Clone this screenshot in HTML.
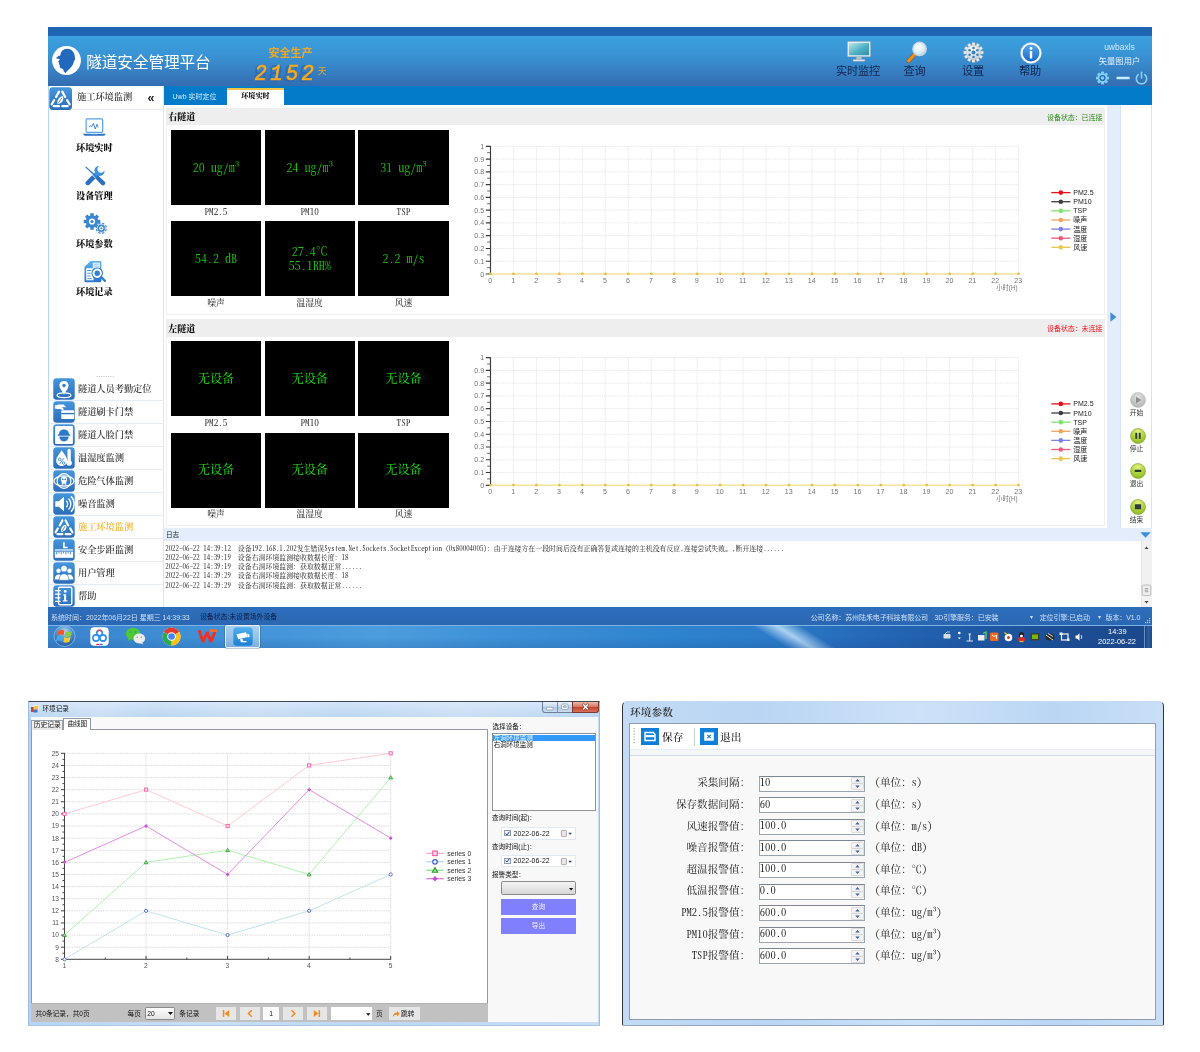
<!DOCTYPE html>
<html lang="zh-CN"><head><meta charset="utf-8"><title>隧道安全管理平台</title>
<style>
*{box-sizing:border-box;margin:0;padding:0}
html,body{width:1200px;height:1052px;background:#fff;overflow:hidden}
body{position:relative;font-family:"Liberation Sans","Noto Sans CJK SC",sans-serif;font-size:9px;color:#222;-webkit-font-smoothing:antialiased}
#root{position:absolute;left:0;top:0;width:1200px;height:1052px;will-change:transform;transform:translateZ(0)}
.a{position:absolute}
.t{position:absolute;white-space:nowrap;line-height:1}
.song{font-family:"Liberation Serif","Noto Serif CJK SC",serif}
.mono{font-family:"Liberation Mono","Noto Sans CJK SC",monospace}
.logf{font-family:"Noto Serif CJK SC","Liberation Serif",serif;font-feature-settings:"hwid";white-space:pre;letter-spacing:.015px}
.hwid{font-family:"Noto Serif CJK SC","Liberation Serif",serif;font-feature-settings:"hwid"}
svg{position:absolute;overflow:visible}
svg text{font-family:"Liberation Sans","Noto Sans CJK SC",sans-serif}
</style></head>
<body>
<div id="root">
<div class="a" style="left:48px;top:27px;width:1104px;height:10px;background:#2065b4"></div>
<div class="a" style="left:48px;top:36px;width:1104px;height:50px;background:linear-gradient(#3ba0dd 0%,#3995d5 35%,#3783c6 65%,#3572b6 90%,#346db1 100%)"></div>
<div class="a" style="left:48px;top:86px;width:1104px;height:19px;background:#037bc9"></div>
<svg style="left:52px;top:46.300px" width="29" height="29" viewBox="0 0 29 29">
<circle cx="14.500" cy="14.500" r="14.400" fill="#fff"/>
<path d="M4.200 11.700L6.100 10.200L8.300 9.600C8.500 5.800 11.200 2.800 14.800 2.800C19.300 2.800 22.600 6.200 22.800 10.500L23.100 14L22 14.800C21.600 18 20.300 20 18.300 22L13.300 27L11.900 25.400L11 23.100L8.300 22L7.600 20.800L7.950 19.700L7.200 18.500L6.800 16.300L6.050 15.900L7.600 13.600V12.900L4.500 12.500z" fill="#2169bd"/>
</svg>
<div class="t" style="left:86.3px;top:55.2px;font-size:15.7px;color:#fff;font-weight:400;letter-spacing:-0.15px">隧道安全管理平台</div>
<div class="t" style="left:290.5px;top:52.5px;font-size:11px;color:#f7a61c;transform:translate(-50%,-50%);font-weight:700">安全生产</div>
<svg style="left:0;top:0" width="400" height="100"><g transform="translate(256.0,65) skewX(-8)" fill="none" stroke="#2a5fb0" stroke-width="2" stroke-linecap="round" opacity=".55"><path d="M2 1H9M1 2.500V7M10 2.500V7M2 8.300H9M1 9.800V14.500M10 9.800V14.500M2 15.800H9"/></g><g transform="translate(271.1,65) skewX(-8)" fill="none" stroke="#2a5fb0" stroke-width="2" stroke-linecap="round" opacity=".55"><path d="M2 1H9M1 2.500V7M10 2.500V7M2 8.300H9M1 9.800V14.500M10 9.800V14.500M2 15.800H9"/></g><g transform="translate(286.2,65) skewX(-8)" fill="none" stroke="#2a5fb0" stroke-width="2" stroke-linecap="round" opacity=".55"><path d="M2 1H9M1 2.500V7M10 2.500V7M2 8.300H9M1 9.800V14.500M10 9.800V14.500M2 15.800H9"/></g><g transform="translate(301.3,65) skewX(-8)" fill="none" stroke="#2a5fb0" stroke-width="2" stroke-linecap="round" opacity=".55"><path d="M2 1H9M1 2.500V7M10 2.500V7M2 8.300H9M1 9.800V14.500M10 9.800V14.500M2 15.800H9"/></g></svg>
<div class="t" style="left:254.5px;top:63.5px;font-size:20.5px;color:#fbaa19;font-family:'Liberation Mono',monospace;font-weight:400;-webkit-text-stroke:.55px #fbaa19;font-style:italic;letter-spacing:3.400px;transform:scaleY(1.04);transform-origin:0 0">2152</div>
<div class="t" style="left:322.3px;top:70.5px;font-size:8.5px;color:#f7a61c;transform:translate(-50%,-50%);">天</div>
<svg style="left:847px;top:41.300px" width="24" height="21.200" viewBox="0 0 26 23">
<defs><linearGradient id="mg" x1="0" y1="0" x2="1" y2="1"><stop offset="0" stop-color="#bfe9ef"/><stop offset=".55" stop-color="#4fb0c4"/><stop offset="1" stop-color="#2b8fa8"/></linearGradient></defs>
<rect x=".5" y=".5" width="25" height="16.500" rx="1" fill="#eef2f5" stroke="#9aa7b2" stroke-width=".6"/>
<rect x="2" y="2" width="22" height="13.500" fill="url(#mg)"/>
<path d="M10.500 17h5l.8 3.200h-6.600z" fill="#b9c2ca"/><rect x="6.500" y="20" width="13" height="2" rx=".8" fill="#e6eaee" stroke="#9aa7b2" stroke-width=".4"/></svg>
<div class="t" style="left:858px;top:72px;font-size:11.2px;color:#12264f;transform:translate(-50%,-50%);letter-spacing:-.2px">实时监控</div>
<svg style="left:904.500px;top:41.200px" width="23.500" height="22.500" viewBox="0 0 24 24">
<defs><radialGradient id="lg" cx=".4" cy=".35" r=".7"><stop offset="0" stop-color="#ffffff"/><stop offset=".7" stop-color="#d6e9f7"/><stop offset="1" stop-color="#9ec4e4"/></radialGradient></defs>
<path d="M3.300 21.300L10 13.800" stroke="#9a5408" stroke-width="4.300" stroke-linecap="round"/><path d="M3.300 21.300L10 13.800" stroke="#ee8f1f" stroke-width="3.300" stroke-linecap="round"/>
<circle cx="15" cy="8.500" r="7.200" fill="url(#lg)" stroke="#c9d6e2" stroke-width="1.300"/></svg>
<div class="t" style="left:914.6px;top:72px;font-size:11.2px;color:#12264f;transform:translate(-50%,-50%);letter-spacing:-.2px">查询</div>
<svg style="left:963.300px;top:41.600px" width="21" height="21" viewBox="-12 -12 24 24">
<defs><radialGradient id="gg" cx=".4" cy=".3" r=".8"><stop offset="0" stop-color="#ffffff"/><stop offset="1" stop-color="#c3c9cf"/></radialGradient></defs>
<g fill="#e9ecef" stroke="#aab2ba" stroke-width=".4"><rect x="-1.700" y="-11.300" width="3.400" height="4.500" rx=".5" transform="rotate(0)"/><rect x="-1.700" y="-11.300" width="3.400" height="4.500" rx=".5" transform="rotate(30)"/><rect x="-1.700" y="-11.300" width="3.400" height="4.500" rx=".5" transform="rotate(60)"/><rect x="-1.700" y="-11.300" width="3.400" height="4.500" rx=".5" transform="rotate(90)"/><rect x="-1.700" y="-11.300" width="3.400" height="4.500" rx=".5" transform="rotate(120)"/><rect x="-1.700" y="-11.300" width="3.400" height="4.500" rx=".5" transform="rotate(150)"/><rect x="-1.700" y="-11.300" width="3.400" height="4.500" rx=".5" transform="rotate(180)"/><rect x="-1.700" y="-11.300" width="3.400" height="4.500" rx=".5" transform="rotate(210)"/><rect x="-1.700" y="-11.300" width="3.400" height="4.500" rx=".5" transform="rotate(240)"/><rect x="-1.700" y="-11.300" width="3.400" height="4.500" rx=".5" transform="rotate(270)"/><rect x="-1.700" y="-11.300" width="3.400" height="4.500" rx=".5" transform="rotate(300)"/><rect x="-1.700" y="-11.300" width="3.400" height="4.500" rx=".5" transform="rotate(330)"/></g><circle r="8.300" fill="url(#gg)" stroke="#b3bac1" stroke-width=".5"/>
<g fill="#3b82c4"><circle r="2.300"/><circle cx="0" cy="-5.200" r="1.500"/><circle cx="4.500" cy="-2.600" r="1.500"/><circle cx="4.500" cy="2.600" r="1.500"/><circle cx="0" cy="5.200" r="1.500"/><circle cx="-4.500" cy="2.600" r="1.500"/><circle cx="-4.500" cy="-2.600" r="1.500"/></g></svg>
<div class="t" style="left:973px;top:72px;font-size:11.2px;color:#12264f;transform:translate(-50%,-50%);letter-spacing:-.2px">设置</div>
<svg style="left:1020.300px;top:41.600px" width="22" height="22" viewBox="0 0 23 23">
<defs><linearGradient id="ig" x1="0" y1="0" x2="0" y2="1"><stop offset="0" stop-color="#5aa9ee"/><stop offset="1" stop-color="#1868c8"/></linearGradient></defs>
<circle cx="11.500" cy="11.500" r="10.800" fill="#fff" stroke="#dfe8f2" stroke-width=".6"/><circle cx="11.500" cy="11.500" r="8.800" fill="url(#ig)"/>
<circle cx="11.500" cy="6.800" r="1.500" fill="#fff"/><rect x="10.200" y="9.300" width="2.600" height="8" rx=".6" fill="#fff"/></svg>
<div class="t" style="left:1030px;top:72px;font-size:11.2px;color:#12264f;transform:translate(-50%,-50%);letter-spacing:-.2px">帮助</div>
<div class="t" style="left:1119.5px;top:47.2px;font-size:8.5px;color:#cfe6fb;transform:translate(-50%,-50%);">uwbaxls</div>
<div class="t" style="left:1119.5px;top:61.3px;font-size:8.3px;color:#e4f1fd;transform:translate(-50%,-50%);">矢量图用户</div>
<svg style="left:1094px;top:70.500px" width="58" height="14" viewBox="0 0 58 14">
<g transform="translate(8.500,7) scale(1.15)" fill="#7fd2f7"><rect x="-1.200" y="-5.600" width="2.400" height="2.600" transform="rotate(0)"/><rect x="-1.200" y="-5.600" width="2.400" height="2.600" transform="rotate(45)"/><rect x="-1.200" y="-5.600" width="2.400" height="2.600" transform="rotate(90)"/><rect x="-1.200" y="-5.600" width="2.400" height="2.600" transform="rotate(135)"/><rect x="-1.200" y="-5.600" width="2.400" height="2.600" transform="rotate(180)"/><rect x="-1.200" y="-5.600" width="2.400" height="2.600" transform="rotate(225)"/><rect x="-1.200" y="-5.600" width="2.400" height="2.600" transform="rotate(270)"/><rect x="-1.200" y="-5.600" width="2.400" height="2.600" transform="rotate(315)"/><circle r="4.200"/><circle r="2.700" fill="#2d6ab4"/><circle r="1.500"/></g>
<rect x="22.300" y="5.800" width="13.500" height="2.500" rx="1.200" fill="#c9ecff"/>
<g fill="none" stroke="#7fd2f7" stroke-width="1.600" stroke-linecap="round"><path d="M44.200 3.600a5.200 5.200 0 1 0 6.600 0"/><path d="M47.500 1.300v5.600"/></g></svg>
<div class="t" style="left:194.5px;top:95.5px;font-size:7px;color:#d7ecfb;transform:translate(-50%,-50%);">Uwb 实时定位</div>
<div class="a" style="left:227px;top:87.8px;width:57.4px;height:17.2px;background:#fff;border-top:2.400px solid #f6c443"></div>
<div class="t song" style="left:255.4px;top:96.6px;font-size:7.1px;color:#111;transform:translate(-50%,-50%);font-weight:900">环境实时</div>
<div class="a" style="left:48px;top:86px;width:115.5px;height:521.5px;background:#fff;border-left:1px solid #b9d8f2;border-right:1px solid #dbe6f0"></div>
<div class="a" style="left:49px;top:109px;width:114px;height:1px;background:#e4edf5"></div>
<svg style="left:48.9px;top:86.9px" width="23.3" height="23.3" viewBox="0 0 24 24"><defs><linearGradient id="tg" x1="0" y1="0" x2="0" y2="1"><stop offset="0" stop-color="#4496dc"/><stop offset="1" stop-color="#2c6db9"/></linearGradient></defs><rect x=".3" y=".3" width="23.400" height="23.400" rx="3.600" fill="url(#tg)"/><g stroke="#fff" stroke-width="2.300" stroke-linecap="round" fill="none"><path d="M10.300 4.800L7.300 10.300M5.300 13.500L2.800 17.800M4.800 19.800H10.300M13.700 19.800H19.200M21.200 17.800L18.700 13.500M16.700 10.300L13.700 4.800"/></g>
<g transform="translate(11.800 13.600) scale(1.45) translate(-11.800 -13)"><path d="M9.700 15.800c-.4-3 .9-5 3.800-5.800.9 2.900-.3 5-3.800 5.800z" fill="#fff"/><path d="M10.200 15.300l2.600-4" stroke="#2f79c9" stroke-width=".6"/></g></svg>
<div class="t song" style="left:77px;top:98.2px;font-size:9.3px;color:#3c3c3c;transform:translate(0,-50%);font-weight:600;letter-spacing:-.1px">施工环境监测</div>
<div class="t" style="left:151.0px;top:97.6px;font-size:12.5px;color:#222;transform:translate(-50%,-50%);font-weight:700">«</div>
<svg style="left:83.200px;top:117.800px" width="22.800" height="19.200" viewBox="0 0 24 20">
<rect x="3.300" y=".9" width="17.400" height="14.200" rx="1.200" fill="#fff" stroke="#5aa2e4" stroke-width="1.300"/>
<path d="M6.300 9.500l1.500-1.300 1.300 1 1.800-3.700 2 6 1.800-5 1.200 3.300" fill="none" stroke="#3a86d2" stroke-width="1" stroke-linejoin="round"/>
<path d="M.3 16.600h23.400c0 1.300-.9 2-2.100 2H2.400c-1.200 0-2.100-.7-2.100-2z" fill="#2c72c4"/><rect x="8.500" y="15.900" width="7" height="1" fill="#d9ebfb"/></svg>
<div class="t song" style="left:94.3px;top:149.2px;font-size:9.2px;color:#111;transform:translate(-50%,-50%);font-weight:900;letter-spacing:-.1px">环境实时</div>
<svg style="left:83.800px;top:164.800px" width="22.400" height="22.400" viewBox="0 0 24 24">
<path d="M16.300 1.200c-3.300-.2-5.700 2.700-4.900 5.900l.3.900-2.500 2.500 3.500 3.500 2.500-2.500c3.700 1.300 7.300-1.600 6.700-5.500-1.600 2.900-5 3-6.700.9-1.500-1.900-.9-4.600 1.100-5.700z" fill="#3c92de"/>
<path d="M8.800 10.900l3.500 3.500-6.600 6.700c-2.300 2.200-5.700-1.200-3.500-3.500z" fill="#2c70c0"/>
<path d="M1.300 2.500l.9-.9 9.300 8.300 1.900 1.900-1.200 1.200-1.900-1.900z" fill="#2f7bd0"/>
<path d="M11.900 14l2.900-2.900 7.200 6.600c2.400 2.300-1.100 5.800-3.400 3.400z" fill="#2c70c0"/></svg>
<div class="t song" style="left:94.3px;top:196.9px;font-size:9.2px;color:#111;transform:translate(-50%,-50%);font-weight:900;letter-spacing:-.1px">设备管理</div>
<svg style="left:82.7px;top:213px" width="24" height="21" viewBox="0 0 24 21">
<g transform="translate(9,8.500)" fill="#3a86d2"><rect x="-1.700" y="-8.300" width="3.400" height="3.600" transform="rotate(0)"/><rect x="-1.700" y="-8.300" width="3.400" height="3.600" transform="rotate(45)"/><rect x="-1.700" y="-8.300" width="3.400" height="3.600" transform="rotate(90)"/><rect x="-1.700" y="-8.300" width="3.400" height="3.600" transform="rotate(135)"/><rect x="-1.700" y="-8.300" width="3.400" height="3.600" transform="rotate(180)"/><rect x="-1.700" y="-8.300" width="3.400" height="3.600" transform="rotate(225)"/><rect x="-1.700" y="-8.300" width="3.400" height="3.600" transform="rotate(270)"/><rect x="-1.700" y="-8.300" width="3.400" height="3.600" transform="rotate(315)"/><circle r="6.200"/><circle r="3.100" fill="#fff"/><circle r="1.600"/></g>
<g transform="translate(18.300,15.300)" fill="#3a86d2"><rect x="-1.200" y="-5.600" width="2.400" height="2.600" transform="rotate(22)"/><rect x="-1.200" y="-5.600" width="2.400" height="2.600" transform="rotate(67)"/><rect x="-1.200" y="-5.600" width="2.400" height="2.600" transform="rotate(112)"/><rect x="-1.200" y="-5.600" width="2.400" height="2.600" transform="rotate(157)"/><rect x="-1.200" y="-5.600" width="2.400" height="2.600" transform="rotate(202)"/><rect x="-1.200" y="-5.600" width="2.400" height="2.600" transform="rotate(247)"/><rect x="-1.200" y="-5.600" width="2.400" height="2.600" transform="rotate(292)"/><rect x="-1.200" y="-5.600" width="2.400" height="2.600" transform="rotate(337)"/><circle r="4.100" stroke="#fff" stroke-width=".7"/><circle r="2.100" fill="#fff"/><circle r="1"/></g></svg>
<div class="t song" style="left:94.3px;top:244.6px;font-size:9.2px;color:#111;transform:translate(-50%,-50%);font-weight:900;letter-spacing:-.1px">环境参数</div>
<svg style="left:83.700px;top:260.300px" width="22" height="22.300" viewBox="0 0 24 24">
<defs><linearGradient id="dg" x1="0" y1="0" x2="0" y2="1"><stop offset="0" stop-color="#5fb0ee"/><stop offset="1" stop-color="#2a74c8"/></linearGradient></defs>
<path d="M7.100 1H17.500a1.400 1.400 0 0 1 1.400 1.400V22.600a1.400 1.400 0 0 1-1.400 1.400H1.900a1.400 1.400 0 0 1-1.400-1.400V7.600z" fill="url(#dg)"/>
<rect x="9.600" y="2.600" width="7.900" height="6" fill="#dcecfb"/><path d="M11 4.500h5M11 6.500h5" stroke="#9cc6ee" stroke-width=".9"/>
<rect x="2.400" y="8.800" width="8" height="13.200" fill="#fff"/><path d="M3.600 11.300h4.500M3.600 14.300h3.500M3.600 17.300h3.500M3.600 20.200h5" stroke="#3a86d2" stroke-width="1"/>
<circle cx="14.400" cy="14.300" r="6.300" fill="#2f7fd2"/><circle cx="14.400" cy="14.300" r="5.100" fill="#fff"/><circle cx="14.400" cy="14.300" r="2.900" fill="#2f7fd2"/>
<path d="M18.700 18.600l4.200 4" stroke="#2f7fd2" stroke-width="2.500" stroke-linecap="round"/></svg>
<div class="t song" style="left:94.3px;top:292.5px;font-size:9.2px;color:#111;transform:translate(-50%,-50%);font-weight:900;letter-spacing:-.1px">环境记录</div>
<div class="t" style="left:105.3px;top:373.5px;font-size:7px;color:#888;transform:translate(-50%,-50%);letter-spacing:.35px">........</div>
<svg style="left:52.6px;top:378.1px" width="22" height="22" viewBox="0 0 24 24"><defs><linearGradient id="tg" x1="0" y1="0" x2="0" y2="1"><stop offset="0" stop-color="#4496dc"/><stop offset="1" stop-color="#2c6db9"/></linearGradient></defs><rect x=".3" y=".3" width="23.400" height="23.400" rx="3.600" fill="url(#tg)"/><path d="M12 3.300c-3 0-5 2.200-5 4.900 0 3.300 3.400 6.300 5 9.600 1.600-3.300 5-6.300 5-9.600 0-2.700-2-4.900-5-4.900z" fill="#fff"/><circle cx="12" cy="8.200" r="1.900" fill="#2f79c9"/><ellipse cx="12" cy="18.800" rx="7.600" ry="2.600" fill="none" stroke="#fff" stroke-width="1.300"/></svg>
<div class="t song" style="left:78px;top:390.20000000000005px;font-size:9.3px;color:#3a3a3a;transform:translate(0,-50%);font-weight:600;letter-spacing:-.12px">隧道人员考勤定位</div>
<div class="a" style="left:49px;top:400px;width:114px;height:1px;background:#e6eef5"></div>
<svg style="left:52.6px;top:401.05px" width="22" height="22" viewBox="0 0 24 24"><defs><linearGradient id="tg" x1="0" y1="0" x2="0" y2="1"><stop offset="0" stop-color="#4496dc"/><stop offset="1" stop-color="#2c6db9"/></linearGradient></defs><rect x=".3" y=".3" width="23.400" height="23.400" rx="3.600" fill="url(#tg)"/><rect x="9" y="10" width="14" height="9.500" rx="1" fill="#fff"/><rect x="9" y="13" width="14" height="1.500" fill="#2f79c9"/><path d="M2 4.500h2.500l1-.8h6l3 3.200h-5l2 1.500v1.800l-4-1.600H4.500L2 8.300z" fill="#fff"/></svg>
<div class="t song" style="left:78px;top:413.15000000000003px;font-size:9.3px;color:#3a3a3a;transform:translate(0,-50%);font-weight:600;letter-spacing:-.12px">隧道刷卡门禁</div>
<div class="a" style="left:49px;top:423px;width:114px;height:1px;background:#e6eef5"></div>
<svg style="left:52.6px;top:424.0px" width="22" height="22" viewBox="0 0 24 24"><defs><linearGradient id="tg" x1="0" y1="0" x2="0" y2="1"><stop offset="0" stop-color="#4496dc"/><stop offset="1" stop-color="#2c6db9"/></linearGradient></defs><rect x=".3" y=".3" width="23.400" height="23.400" rx="3.600" fill="url(#tg)"/><rect x="2.300" y="2.300" width="19.400" height="19.400" rx="1" fill="#fff"/><path d="M6.500 11.300c0-3.300 2.400-5.300 5.500-5.300s5.500 2 5.500 5.300h1.300v1.400H5.200v-1.400z" fill="#2f79c9"/><path d="M7 13.600h10c0 3.200-2.200 5.400-5 5.400s-5-2.200-5-5.400z" fill="#2f79c9"/></svg>
<div class="t song" style="left:78px;top:436.1px;font-size:9.3px;color:#3a3a3a;transform:translate(0,-50%);font-weight:600;letter-spacing:-.12px">隧道人脸门禁</div>
<div class="a" style="left:49px;top:446px;width:114px;height:1px;background:#e6eef5"></div>
<svg style="left:52.6px;top:446.95000000000005px" width="22" height="22" viewBox="0 0 24 24"><defs><linearGradient id="tg" x1="0" y1="0" x2="0" y2="1"><stop offset="0" stop-color="#4496dc"/><stop offset="1" stop-color="#2c6db9"/></linearGradient></defs><rect x=".3" y=".3" width="23.400" height="23.400" rx="3.600" fill="url(#tg)"/><path d="M9.500 3.500c-2.600 4.300-6 7.300-6 11.300 0 3.400 2.600 6 6 6s6-2.600 6-6c0-4-3.400-7-6-11.300z" fill="#fff"/><rect x="15.800" y="2" width="3.600" height="15" rx="1.800" fill="#fff"/><circle cx="17.600" cy="17.500" r="3" fill="#fff"/><circle cx="7.300" cy="13.500" r="1.400" fill="none" stroke="#2f79c9" stroke-width=".9"/><circle cx="11.500" cy="17.500" r="1.400" fill="none" stroke="#2f79c9" stroke-width=".9"/><path d="M11.800 12.300l-4.800 6.400" stroke="#2f79c9" stroke-width=".9"/></svg>
<div class="t song" style="left:78px;top:459.05000000000007px;font-size:9.3px;color:#3a3a3a;transform:translate(0,-50%);font-weight:600;letter-spacing:-.12px">温湿度监测</div>
<div class="a" style="left:49px;top:469px;width:114px;height:1px;background:#e6eef5"></div>
<svg style="left:52.6px;top:469.90000000000003px" width="22" height="22" viewBox="0 0 24 24"><defs><linearGradient id="tg" x1="0" y1="0" x2="0" y2="1"><stop offset="0" stop-color="#4496dc"/><stop offset="1" stop-color="#2c6db9"/></linearGradient></defs><rect x=".3" y=".3" width="23.400" height="23.400" rx="3.600" fill="url(#tg)"/><ellipse cx="12" cy="12" rx="11" ry="5.600" fill="none" stroke="#fff" stroke-width="1.300"/><ellipse cx="12" cy="12" rx="7.500" ry="8" fill="none" stroke="#fff" stroke-width="1.300"/><circle cx="12" cy="10.300" r="3.400" fill="#fff"/><path d="M9.600 12.500h4.800v3.500h-1.200v-1.300h-.8v1.300h-.8v-1.300h-.8v1.300H9.600z" fill="#fff"/><circle cx="10.700" cy="10.300" r=".9" fill="#2f79c9"/><circle cx="13.300" cy="10.300" r=".9" fill="#2f79c9"/></svg>
<div class="t song" style="left:78px;top:482.00000000000006px;font-size:9.3px;color:#3a3a3a;transform:translate(0,-50%);font-weight:600;letter-spacing:-.12px">危险气体监测</div>
<div class="a" style="left:49px;top:492px;width:114px;height:1px;background:#e6eef5"></div>
<svg style="left:52.6px;top:492.85px" width="22" height="22" viewBox="0 0 24 24"><defs><linearGradient id="tg" x1="0" y1="0" x2="0" y2="1"><stop offset="0" stop-color="#4496dc"/><stop offset="1" stop-color="#2c6db9"/></linearGradient></defs><rect x=".3" y=".3" width="23.400" height="23.400" rx="3.600" fill="url(#tg)"/><path d="M2.500 9h3.800l5.700-5v16l-5.700-5H2.500z" fill="#fff"/><path d="M14.500 8.500a5 5 0 0 1 0 7M17 6a8.500 8.500 0 0 1 0 12M19.600 3.600a12 12 0 0 1 0 16.800" fill="none" stroke="#fff" stroke-width="1.500"/></svg>
<div class="t song" style="left:78px;top:504.95000000000005px;font-size:9.3px;color:#3a3a3a;transform:translate(0,-50%);font-weight:600;letter-spacing:-.12px">噪音监测</div>
<div class="a" style="left:49px;top:515px;width:114px;height:1px;background:#e6eef5"></div>
<svg style="left:52.6px;top:515.8px" width="22" height="22" viewBox="0 0 24 24"><defs><linearGradient id="tg" x1="0" y1="0" x2="0" y2="1"><stop offset="0" stop-color="#4496dc"/><stop offset="1" stop-color="#2c6db9"/></linearGradient></defs><rect x=".3" y=".3" width="23.400" height="23.400" rx="3.600" fill="url(#tg)"/><g stroke="#fff" stroke-width="2.300" stroke-linecap="round" fill="none"><path d="M10.300 4.800L7.300 10.300M5.300 13.500L2.800 17.800M4.800 19.800H10.300M13.700 19.800H19.200M21.200 17.800L18.700 13.500M16.700 10.300L13.700 4.800"/></g>
<g transform="translate(11.800 13.600) scale(1.45) translate(-11.800 -13)"><path d="M9.700 15.800c-.4-3 .9-5 3.800-5.800.9 2.900-.3 5-3.800 5.800z" fill="#fff"/><path d="M10.200 15.300l2.600-4" stroke="#2f79c9" stroke-width=".6"/></g></svg>
<div class="t song" style="left:78px;top:527.9px;font-size:9.3px;color:#f0b432;transform:translate(0,-50%);font-weight:600;letter-spacing:-.12px">施工环境监测</div>
<div class="a" style="left:49px;top:538px;width:114px;height:1px;background:#e6eef5"></div>
<svg style="left:52.6px;top:538.75px" width="22" height="22" viewBox="0 0 24 24"><defs><linearGradient id="tg" x1="0" y1="0" x2="0" y2="1"><stop offset="0" stop-color="#4496dc"/><stop offset="1" stop-color="#2c6db9"/></linearGradient></defs><rect x=".3" y=".3" width="23.400" height="23.400" rx="3.600" fill="url(#tg)"/><path d="M11 3.500h1.800v5h3.200v1.600H11z" fill="#fff"/><rect x="2" y="13.800" width="20" height="6.700" fill="#fff"/><path d="M4 13.800v3M6.500 13.800v2M9 13.800v3M11.500 13.800v2M14 13.800v3M16.500 13.800v2M19 13.800v3" stroke="#2f79c9" stroke-width=".9"/><rect x="2" y="11.300" width="20" height="1.300" fill="#fff"/></svg>
<div class="t song" style="left:78px;top:550.85px;font-size:9.3px;color:#3a3a3a;transform:translate(0,-50%);font-weight:600;letter-spacing:-.12px">安全步距监测</div>
<div class="a" style="left:49px;top:561px;width:114px;height:1px;background:#e6eef5"></div>
<svg style="left:52.6px;top:561.7px" width="22" height="22" viewBox="0 0 24 24"><defs><linearGradient id="tg" x1="0" y1="0" x2="0" y2="1"><stop offset="0" stop-color="#4496dc"/><stop offset="1" stop-color="#2c6db9"/></linearGradient></defs><rect x=".3" y=".3" width="23.400" height="23.400" rx="3.600" fill="url(#tg)"/><circle cx="6" cy="9.500" r="2.400" fill="#fff"/><circle cx="18" cy="9.500" r="2.400" fill="#fff"/><path d="M1.800 19c0-3.300 1.800-5.500 4.200-5.500 1.200 0 2.200.5 3 1.500-.8 1.100-1.300 2.400-1.400 4zM22.200 19c0-3.300-1.800-5.500-4.200-5.500-1.200 0-2.200.5-3 1.500.8 1.100 1.300 2.400 1.400 4z" fill="#fff"/><circle cx="12" cy="7.300" r="3.100" fill="#fff"/><path d="M6.600 20c0-4.300 2.300-7.300 5.400-7.300s5.400 3 5.400 7.300z" fill="#fff" stroke="#2f79c9" stroke-width=".7"/></svg>
<div class="t song" style="left:78px;top:573.8000000000001px;font-size:9.3px;color:#3a3a3a;transform:translate(0,-50%);font-weight:600;letter-spacing:-.12px">用户管理</div>
<div class="a" style="left:49px;top:584px;width:114px;height:1px;background:#e6eef5"></div>
<svg style="left:52.6px;top:584.65px" width="22" height="22" viewBox="0 0 24 24"><defs><linearGradient id="tg" x1="0" y1="0" x2="0" y2="1"><stop offset="0" stop-color="#4496dc"/><stop offset="1" stop-color="#2c6db9"/></linearGradient></defs><rect x=".3" y=".3" width="23.400" height="23.400" rx="3.600" fill="url(#tg)"/><rect x="6" y="2.500" width="14.500" height="19" rx="1.500" fill="none" stroke="#fff" stroke-width="1.500"/><path d="M2.800 6.200h5M2.800 10h5M2.800 14h5M2.800 17.800h5" stroke="#fff" stroke-width="1.500" stroke-linecap="round"/><circle cx="13.300" cy="7" r="1.500" fill="#fff"/><path d="M11.300 10h3v6.500h1.400v1.500h-5v-1.500h1.400v-5h-.8z" fill="#fff"/></svg>
<div class="t song" style="left:78px;top:596.75px;font-size:9.3px;color:#3a3a3a;transform:translate(0,-50%);font-weight:600;letter-spacing:-.12px">帮助</div>
<div class="a" style="left:164px;top:105px;width:988px;height:422.5px;background:#fff;border-right:1px solid #d3e3f4"></div>
<div class="a" style="left:1107.3px;top:105px;width:12.5px;height:422.5px;background:#e3edfb"></div>
<div class="a" style="left:1119.8px;top:105px;width:0.8px;height:422.5px;background:#d5e2f2"></div>
<svg style="left:1110px;top:312px" width="7" height="10" viewBox="0 0 7 10"><path d="M.4.3L6.400 5 .4 9.700z" fill="#3f8fd8"/></svg>
<div class="a" style="left:165.5px;top:108px;width:939.8px;height:206.6px;border:1px solid #efefef;background:#fff"></div>
<div class="a" style="left:165.5px;top:108px;width:939.8px;height:17.3px;background:#eeeeee"></div>
<div class="t song" style="left:168.3px;top:117.3px;font-size:9px;color:#111;transform:translate(0,-50%);font-weight:900">右隧道</div>
<div class="t" style="left:1102.3px;top:117.1px;font-size:7px;color:#2c8a1c;transform:translate(-100%,-50%);letter-spacing:-.1px">设备状态：已连接</div>
<div class="a" style="left:170.75px;top:130.0px;width:90.5px;height:75px;background:#000"><div class="t song" style="left:50%;top:50%;transform:translate(-50%,-50%);font-size:12px;color:#1ec40d;text-align:center;line-height:12.8px"><span class="hwid">20 ug/m³</span></div></div>
<div class="t song" style="left:215.95px;top:211.6px;font-size:9.2px;color:#222;transform:translate(-50%,-50%);"><span class="hwid">PM2.5</span></div>
<div class="a" style="left:264.5px;top:130.0px;width:90.5px;height:75px;background:#000"><div class="t song" style="left:50%;top:50%;transform:translate(-50%,-50%);font-size:12px;color:#1ec40d;text-align:center;line-height:12.8px"><span class="hwid">24 ug/m³</span></div></div>
<div class="t song" style="left:309.7px;top:211.6px;font-size:9.2px;color:#222;transform:translate(-50%,-50%);"><span class="hwid">PM10</span></div>
<div class="a" style="left:358.25px;top:130.0px;width:90.5px;height:75px;background:#000"><div class="t song" style="left:50%;top:50%;transform:translate(-50%,-50%);font-size:12px;color:#1ec40d;text-align:center;line-height:12.8px"><span class="hwid">31 ug/m³</span></div></div>
<div class="t song" style="left:403.45px;top:211.6px;font-size:9.2px;color:#222;transform:translate(-50%,-50%);"><span class="hwid">TSP</span></div>
<div class="a" style="left:170.75px;top:221.25px;width:90.5px;height:75px;background:#000"><div class="t song" style="left:50%;top:50%;transform:translate(-50%,-50%);font-size:12px;color:#1ec40d;text-align:center;line-height:12.8px"><span class="hwid">54.2 dB</span></div></div>
<div class="t song" style="left:215.95px;top:302.85px;font-size:8.8px;color:#222;transform:translate(-50%,-50%);"><span class="hwid">噪声</span></div>
<div class="a" style="left:264.5px;top:221.25px;width:90.5px;height:75px;background:#000"><div class="t song" style="left:50%;top:50%;transform:translate(-50%,-50%);font-size:12px;color:#1ec40d;text-align:center;line-height:12.8px"><span class="hwid">27.4℃</span><br><span class="hwid">55.1RH%</span></div></div>
<div class="t song" style="left:309.7px;top:302.85px;font-size:8.8px;color:#222;transform:translate(-50%,-50%);"><span class="hwid">温湿度</span></div>
<div class="a" style="left:358.25px;top:221.25px;width:90.5px;height:75px;background:#000"><div class="t song" style="left:50%;top:50%;transform:translate(-50%,-50%);font-size:12px;color:#1ec40d;text-align:center;line-height:12.8px"><span class="hwid">2.2 m/s</span></div></div>
<div class="t song" style="left:403.45px;top:302.85px;font-size:8.8px;color:#222;transform:translate(-50%,-50%);"><span class="hwid">风速</span></div>
<div class="a" style="left:165.5px;top:319.3px;width:939.8px;height:206.6px;border:1px solid #efefef;background:#fff"></div>
<div class="a" style="left:165.5px;top:319.3px;width:939.8px;height:17.3px;background:#eeeeee"></div>
<div class="t song" style="left:168.3px;top:328.6px;font-size:9px;color:#111;transform:translate(0,-50%);font-weight:900">左隧道</div>
<div class="t" style="left:1102.3px;top:328.40000000000003px;font-size:7px;color:#f0141e;transform:translate(-100%,-50%);letter-spacing:-.1px">设备状态：未连接</div>
<div class="a" style="left:170.75px;top:341.3px;width:90.5px;height:75px;background:#000"><div class="t song" style="left:50%;top:50%;transform:translate(-50%,-50%);font-size:12.2px;color:#22e614;">无设备</div></div>
<div class="t song" style="left:215.95px;top:422.9px;font-size:9.2px;color:#222;transform:translate(-50%,-50%);"><span class="hwid">PM2.5</span></div>
<div class="a" style="left:264.5px;top:341.3px;width:90.5px;height:75px;background:#000"><div class="t song" style="left:50%;top:50%;transform:translate(-50%,-50%);font-size:12.2px;color:#22e614;">无设备</div></div>
<div class="t song" style="left:309.7px;top:422.9px;font-size:9.2px;color:#222;transform:translate(-50%,-50%);"><span class="hwid">PM10</span></div>
<div class="a" style="left:358.25px;top:341.3px;width:90.5px;height:75px;background:#000"><div class="t song" style="left:50%;top:50%;transform:translate(-50%,-50%);font-size:12.2px;color:#22e614;">无设备</div></div>
<div class="t song" style="left:403.45px;top:422.9px;font-size:9.2px;color:#222;transform:translate(-50%,-50%);"><span class="hwid">TSP</span></div>
<div class="a" style="left:170.75px;top:432.55px;width:90.5px;height:75px;background:#000"><div class="t song" style="left:50%;top:50%;transform:translate(-50%,-50%);font-size:12.2px;color:#22e614;">无设备</div></div>
<div class="t song" style="left:215.95px;top:514.15px;font-size:8.8px;color:#222;transform:translate(-50%,-50%);"><span class="hwid">噪声</span></div>
<div class="a" style="left:264.5px;top:432.55px;width:90.5px;height:75px;background:#000"><div class="t song" style="left:50%;top:50%;transform:translate(-50%,-50%);font-size:12.2px;color:#22e614;">无设备</div></div>
<div class="t song" style="left:309.7px;top:514.15px;font-size:8.8px;color:#222;transform:translate(-50%,-50%);"><span class="hwid">温湿度</span></div>
<div class="a" style="left:358.25px;top:432.55px;width:90.5px;height:75px;background:#000"><div class="t song" style="left:50%;top:50%;transform:translate(-50%,-50%);font-size:12.2px;color:#22e614;">无设备</div></div>
<div class="t song" style="left:403.45px;top:514.15px;font-size:8.8px;color:#222;transform:translate(-50%,-50%);"><span class="hwid">风速</span></div>
<svg style="left:0;top:0" width="1200" height="1052"><g font-size="7.100" fill="#747474"><path d="M490.5 146.30H1018.58M490.5 159.07H1018.58M490.5 171.84H1018.58M490.5 184.61H1018.58M490.5 197.38H1018.58M490.5 210.15H1018.58M490.5 222.92H1018.58M490.5 235.69H1018.58M490.5 248.46H1018.58M490.5 261.23H1018.58M513.46 146.3V274.00M536.42 146.3V274.00M559.38 146.3V274.00M582.34 146.3V274.00M605.30 146.3V274.00M628.26 146.3V274.00M651.22 146.3V274.00M674.18 146.3V274.00M697.14 146.3V274.00M720.10 146.3V274.00M743.06 146.3V274.00M766.02 146.3V274.00M788.98 146.3V274.00M811.94 146.3V274.00M834.90 146.3V274.00M857.86 146.3V274.00M880.82 146.3V274.00M903.78 146.3V274.00M926.74 146.3V274.00M949.70 146.3V274.00M972.66 146.3V274.00M995.62 146.3V274.00M1018.58 146.3V274.00" stroke="#dcdcdc" stroke-width=".65" stroke-dasharray="1.100 .7" fill="none"/><path d="M490.5 145.9V274.4M485.8 146.30H490.5M485.8 159.07H490.5M485.8 171.84H490.5M485.8 184.61H490.5M485.8 197.38H490.5M485.8 210.15H490.5M485.8 222.92H490.5M485.8 235.69H490.5M485.8 248.46H490.5M485.8 261.23H490.5M485.8 274.00H490.5" stroke="#3a3a3a" stroke-width="1.150" fill="none"/><path d="M487.1 152.69H490.5M487.1 165.46H490.5M487.1 178.23H490.5M487.1 191.00H490.5M487.1 203.77H490.5M487.1 216.54H490.5M487.1 229.31H490.5M487.1 242.07H490.5M487.1 254.85H490.5M487.1 267.62H490.5" stroke="#4a4a4a" stroke-width=".8" fill="none"/><path d="M490.5 274.00H1018.58" stroke="#f4e19a" stroke-width="1.500"/><g fill="#e6bf3c"><circle cx="490.50" cy="273.80" r="1.400"/><circle cx="513.46" cy="273.80" r="1.400"/><circle cx="536.42" cy="273.80" r="1.400"/><circle cx="559.38" cy="273.80" r="1.400"/><circle cx="582.34" cy="273.80" r="1.400"/><circle cx="605.30" cy="273.80" r="1.400"/><circle cx="628.26" cy="273.80" r="1.400"/><circle cx="651.22" cy="273.80" r="1.400"/><circle cx="674.18" cy="273.80" r="1.400"/><circle cx="697.14" cy="273.80" r="1.400"/><circle cx="720.10" cy="273.80" r="1.400"/><circle cx="743.06" cy="273.80" r="1.400"/><circle cx="766.02" cy="273.80" r="1.400"/><circle cx="788.98" cy="273.80" r="1.400"/><circle cx="811.94" cy="273.80" r="1.400"/><circle cx="834.90" cy="273.80" r="1.400"/><circle cx="857.86" cy="273.80" r="1.400"/><circle cx="880.82" cy="273.80" r="1.400"/><circle cx="903.78" cy="273.80" r="1.400"/><circle cx="926.74" cy="273.80" r="1.400"/><circle cx="949.70" cy="273.80" r="1.400"/><circle cx="972.66" cy="273.80" r="1.400"/><circle cx="995.62" cy="273.80" r="1.400"/><circle cx="1018.58" cy="273.80" r="1.400"/></g><text x="484.1" y="148.80" text-anchor="end">1</text><text x="484.1" y="161.57" text-anchor="end">0.9</text><text x="484.1" y="174.34" text-anchor="end">0.8</text><text x="484.1" y="187.11" text-anchor="end">0.7</text><text x="484.1" y="199.88" text-anchor="end">0.6</text><text x="484.1" y="212.65" text-anchor="end">0.5</text><text x="484.1" y="225.42" text-anchor="end">0.4</text><text x="484.1" y="238.19" text-anchor="end">0.3</text><text x="484.1" y="250.96" text-anchor="end">0.2</text><text x="484.1" y="263.73" text-anchor="end">0.1</text><text x="484.1" y="276.50" text-anchor="end">0</text><text x="490.20" y="282.50" text-anchor="middle">0</text><text x="513.16" y="282.50" text-anchor="middle">1</text><text x="536.12" y="282.50" text-anchor="middle">2</text><text x="559.08" y="282.50" text-anchor="middle">3</text><text x="582.04" y="282.50" text-anchor="middle">4</text><text x="605.00" y="282.50" text-anchor="middle">5</text><text x="627.96" y="282.50" text-anchor="middle">6</text><text x="650.92" y="282.50" text-anchor="middle">7</text><text x="673.88" y="282.50" text-anchor="middle">8</text><text x="696.84" y="282.50" text-anchor="middle">9</text><text x="719.80" y="282.50" text-anchor="middle">10</text><text x="742.76" y="282.50" text-anchor="middle">11</text><text x="765.72" y="282.50" text-anchor="middle">12</text><text x="788.68" y="282.50" text-anchor="middle">13</text><text x="811.64" y="282.50" text-anchor="middle">14</text><text x="834.60" y="282.50" text-anchor="middle">15</text><text x="857.56" y="282.50" text-anchor="middle">16</text><text x="880.52" y="282.50" text-anchor="middle">17</text><text x="903.48" y="282.50" text-anchor="middle">18</text><text x="926.44" y="282.50" text-anchor="middle">19</text><text x="949.40" y="282.50" text-anchor="middle">20</text><text x="972.36" y="282.50" text-anchor="middle">21</text><text x="995.32" y="282.50" text-anchor="middle">22</text><text x="1018.28" y="282.50" text-anchor="middle">23</text><text x="1017.58" y="289.60" text-anchor="end" font-size="6.300">小时(H)</text><path d="M1051.300 192.60H1070.400" stroke="#e60f16" stroke-width="1.300"/><circle cx="1060.800" cy="192.60" r="2.300" fill="#e60f16"/><text x="1073.300" y="195.10" font-size="7" fill="#222">PM2.5</text><path d="M1051.300 201.72H1070.400" stroke="#3c3c44" stroke-width="1.300"/><circle cx="1060.800" cy="201.72" r="2.300" fill="#3c3c44"/><text x="1073.300" y="204.22" font-size="7" fill="#222">PM10</text><path d="M1051.300 210.84H1070.400" stroke="#7fe36f" stroke-width="1.300"/><circle cx="1060.800" cy="210.84" r="2.300" fill="#7fe36f"/><text x="1073.300" y="213.34" font-size="7" fill="#222">TSP</text><path d="M1051.300 219.96H1070.400" stroke="#f2a25a" stroke-width="1.300"/><circle cx="1060.800" cy="219.96" r="2.300" fill="#f2a25a"/><text x="1073.300" y="222.46" font-size="7" fill="#222">噪声</text><path d="M1051.300 229.08H1070.400" stroke="#7b80e3" stroke-width="1.300"/><circle cx="1060.800" cy="229.08" r="2.300" fill="#7b80e3"/><text x="1073.300" y="231.58" font-size="7" fill="#222">温度</text><path d="M1051.300 238.20H1070.400" stroke="#ee5a7c" stroke-width="1.300"/><circle cx="1060.800" cy="238.20" r="2.300" fill="#ee5a7c"/><text x="1073.300" y="240.70" font-size="7" fill="#222">湿度</text><path d="M1051.300 247.32H1070.400" stroke="#e6c94a" stroke-width="1.300"/><circle cx="1060.800" cy="247.32" r="2.300" fill="#e6c94a"/><text x="1073.300" y="249.82" font-size="7" fill="#222">风速</text></g><g font-size="7.100" fill="#747474"><path d="M490.5 357.60H1018.58M490.5 370.37H1018.58M490.5 383.14H1018.58M490.5 395.91H1018.58M490.5 408.68H1018.58M490.5 421.45H1018.58M490.5 434.22H1018.58M490.5 446.99H1018.58M490.5 459.76H1018.58M490.5 472.53H1018.58M513.46 357.6V485.30M536.42 357.6V485.30M559.38 357.6V485.30M582.34 357.6V485.30M605.30 357.6V485.30M628.26 357.6V485.30M651.22 357.6V485.30M674.18 357.6V485.30M697.14 357.6V485.30M720.10 357.6V485.30M743.06 357.6V485.30M766.02 357.6V485.30M788.98 357.6V485.30M811.94 357.6V485.30M834.90 357.6V485.30M857.86 357.6V485.30M880.82 357.6V485.30M903.78 357.6V485.30M926.74 357.6V485.30M949.70 357.6V485.30M972.66 357.6V485.30M995.62 357.6V485.30M1018.58 357.6V485.30" stroke="#dcdcdc" stroke-width=".65" stroke-dasharray="1.100 .7" fill="none"/><path d="M490.5 357.20000000000005V485.7M485.8 357.60H490.5M485.8 370.37H490.5M485.8 383.14H490.5M485.8 395.91H490.5M485.8 408.68H490.5M485.8 421.45H490.5M485.8 434.22H490.5M485.8 446.99H490.5M485.8 459.76H490.5M485.8 472.53H490.5M485.8 485.30H490.5" stroke="#3a3a3a" stroke-width="1.150" fill="none"/><path d="M487.1 363.99H490.5M487.1 376.75H490.5M487.1 389.53H490.5M487.1 402.30H490.5M487.1 415.06H490.5M487.1 427.84H490.5M487.1 440.61H490.5M487.1 453.38H490.5M487.1 466.15H490.5M487.1 478.92H490.5" stroke="#4a4a4a" stroke-width=".8" fill="none"/><path d="M490.5 485.30H1018.58" stroke="#f4e19a" stroke-width="1.500"/><g fill="#e6bf3c"><circle cx="490.50" cy="485.10" r="1.400"/><circle cx="513.46" cy="485.10" r="1.400"/><circle cx="536.42" cy="485.10" r="1.400"/><circle cx="559.38" cy="485.10" r="1.400"/><circle cx="582.34" cy="485.10" r="1.400"/><circle cx="605.30" cy="485.10" r="1.400"/><circle cx="628.26" cy="485.10" r="1.400"/><circle cx="651.22" cy="485.10" r="1.400"/><circle cx="674.18" cy="485.10" r="1.400"/><circle cx="697.14" cy="485.10" r="1.400"/><circle cx="720.10" cy="485.10" r="1.400"/><circle cx="743.06" cy="485.10" r="1.400"/><circle cx="766.02" cy="485.10" r="1.400"/><circle cx="788.98" cy="485.10" r="1.400"/><circle cx="811.94" cy="485.10" r="1.400"/><circle cx="834.90" cy="485.10" r="1.400"/><circle cx="857.86" cy="485.10" r="1.400"/><circle cx="880.82" cy="485.10" r="1.400"/><circle cx="903.78" cy="485.10" r="1.400"/><circle cx="926.74" cy="485.10" r="1.400"/><circle cx="949.70" cy="485.10" r="1.400"/><circle cx="972.66" cy="485.10" r="1.400"/><circle cx="995.62" cy="485.10" r="1.400"/><circle cx="1018.58" cy="485.10" r="1.400"/></g><text x="484.1" y="360.10" text-anchor="end">1</text><text x="484.1" y="372.87" text-anchor="end">0.9</text><text x="484.1" y="385.64" text-anchor="end">0.8</text><text x="484.1" y="398.41" text-anchor="end">0.7</text><text x="484.1" y="411.18" text-anchor="end">0.6</text><text x="484.1" y="423.95" text-anchor="end">0.5</text><text x="484.1" y="436.72" text-anchor="end">0.4</text><text x="484.1" y="449.49" text-anchor="end">0.3</text><text x="484.1" y="462.26" text-anchor="end">0.2</text><text x="484.1" y="475.03" text-anchor="end">0.1</text><text x="484.1" y="487.80" text-anchor="end">0</text><text x="490.20" y="493.80" text-anchor="middle">0</text><text x="513.16" y="493.80" text-anchor="middle">1</text><text x="536.12" y="493.80" text-anchor="middle">2</text><text x="559.08" y="493.80" text-anchor="middle">3</text><text x="582.04" y="493.80" text-anchor="middle">4</text><text x="605.00" y="493.80" text-anchor="middle">5</text><text x="627.96" y="493.80" text-anchor="middle">6</text><text x="650.92" y="493.80" text-anchor="middle">7</text><text x="673.88" y="493.80" text-anchor="middle">8</text><text x="696.84" y="493.80" text-anchor="middle">9</text><text x="719.80" y="493.80" text-anchor="middle">10</text><text x="742.76" y="493.80" text-anchor="middle">11</text><text x="765.72" y="493.80" text-anchor="middle">12</text><text x="788.68" y="493.80" text-anchor="middle">13</text><text x="811.64" y="493.80" text-anchor="middle">14</text><text x="834.60" y="493.80" text-anchor="middle">15</text><text x="857.56" y="493.80" text-anchor="middle">16</text><text x="880.52" y="493.80" text-anchor="middle">17</text><text x="903.48" y="493.80" text-anchor="middle">18</text><text x="926.44" y="493.80" text-anchor="middle">19</text><text x="949.40" y="493.80" text-anchor="middle">20</text><text x="972.36" y="493.80" text-anchor="middle">21</text><text x="995.32" y="493.80" text-anchor="middle">22</text><text x="1018.28" y="493.80" text-anchor="middle">23</text><text x="1017.58" y="500.90" text-anchor="end" font-size="6.300">小时(H)</text><path d="M1051.300 403.90H1070.400" stroke="#e60f16" stroke-width="1.300"/><circle cx="1060.800" cy="403.90" r="2.300" fill="#e60f16"/><text x="1073.300" y="406.40" font-size="7" fill="#222">PM2.5</text><path d="M1051.300 413.02H1070.400" stroke="#3c3c44" stroke-width="1.300"/><circle cx="1060.800" cy="413.02" r="2.300" fill="#3c3c44"/><text x="1073.300" y="415.52" font-size="7" fill="#222">PM10</text><path d="M1051.300 422.14H1070.400" stroke="#7fe36f" stroke-width="1.300"/><circle cx="1060.800" cy="422.14" r="2.300" fill="#7fe36f"/><text x="1073.300" y="424.64" font-size="7" fill="#222">TSP</text><path d="M1051.300 431.26H1070.400" stroke="#f2a25a" stroke-width="1.300"/><circle cx="1060.800" cy="431.26" r="2.300" fill="#f2a25a"/><text x="1073.300" y="433.76" font-size="7" fill="#222">噪声</text><path d="M1051.300 440.38H1070.400" stroke="#7b80e3" stroke-width="1.300"/><circle cx="1060.800" cy="440.38" r="2.300" fill="#7b80e3"/><text x="1073.300" y="442.88" font-size="7" fill="#222">温度</text><path d="M1051.300 449.50H1070.400" stroke="#ee5a7c" stroke-width="1.300"/><circle cx="1060.800" cy="449.50" r="2.300" fill="#ee5a7c"/><text x="1073.300" y="452.00" font-size="7" fill="#222">湿度</text><path d="M1051.300 458.62H1070.400" stroke="#e6c94a" stroke-width="1.300"/><circle cx="1060.800" cy="458.62" r="2.300" fill="#e6c94a"/><text x="1073.300" y="461.12" font-size="7" fill="#222">风速</text></g></svg>
<svg style="left:1129.5px;top:392px" width="16" height="16" viewBox="0 0 16 16"><defs><radialGradient id="bgp" cx=".5" cy=".3" r=".8"><stop offset="0" stop-color="#e2e2e2"/><stop offset="1" stop-color="#aeaeae"/></radialGradient></defs><circle cx="8" cy="8" r="7.500" fill="url(#bgp)" stroke="#b9b9b9" stroke-width=".6"/><path d="M6 4.800L11.300 8 6 11.200z" fill="#8c8c8c"/></svg>
<div class="t" style="left:1136.5px;top:413px;font-size:6.8px;color:#333;transform:translate(-50%,-50%);">开始</div>
<svg style="left:1129.5px;top:427.7px" width="16" height="16" viewBox="0 0 16 16"><defs><radialGradient id="bgpause" cx=".5" cy=".25" r=".85"><stop offset="0" stop-color="#e2f282"/><stop offset=".55" stop-color="#a9d038"/><stop offset="1" stop-color="#86ae22"/></radialGradient></defs><circle cx="8" cy="8" r="7.500" fill="url(#bgpause)" stroke="#7c9f26" stroke-width=".6"/><rect x="5.300" y="4.800" width="1.900" height="6" fill="#2f3a3a"/><rect x="8.800" y="4.800" width="1.900" height="6" fill="#2f3a3a"/></svg>
<div class="t" style="left:1136.5px;top:448.7px;font-size:6.8px;color:#333;transform:translate(-50%,-50%);">停止</div>
<svg style="left:1129.5px;top:463px" width="16" height="16" viewBox="0 0 16 16"><defs><radialGradient id="bgminus" cx=".5" cy=".25" r=".85"><stop offset="0" stop-color="#e2f282"/><stop offset=".55" stop-color="#a9d038"/><stop offset="1" stop-color="#86ae22"/></radialGradient></defs><circle cx="8" cy="8" r="7.500" fill="url(#bgminus)" stroke="#7c9f26" stroke-width=".6"/><rect x="4.600" y="6.800" width="6.800" height="2.200" rx=".8" fill="#2f3a3a"/></svg>
<div class="t" style="left:1136.5px;top:484px;font-size:6.8px;color:#333;transform:translate(-50%,-50%);">退出</div>
<svg style="left:1129.5px;top:498.6px" width="16" height="16" viewBox="0 0 16 16"><defs><radialGradient id="bgstop" cx=".5" cy=".25" r=".85"><stop offset="0" stop-color="#e2f282"/><stop offset=".55" stop-color="#a9d038"/><stop offset="1" stop-color="#86ae22"/></radialGradient></defs><circle cx="8" cy="8" r="7.500" fill="url(#bgstop)" stroke="#7c9f26" stroke-width=".6"/><rect x="4.900" y="5.300" width="6.200" height="5" rx=".5" fill="#2f3a3a"/></svg>
<div class="t" style="left:1136.5px;top:519.6px;font-size:6.8px;color:#333;transform:translate(-50%,-50%);">结束</div>
<div class="a" style="left:164px;top:527.8px;width:988px;height:13.4px;background:#e3edfb"></div>
<div class="t" style="left:166px;top:534.8px;font-size:6.6px;color:#222;transform:translate(0,-50%);">日志</div>
<svg style="left:1139.500px;top:532px" width="11" height="6" viewBox="0 0 11 6"><path d="M.3.300h10.400L5.500 5.700z" fill="#3f8fd8"/></svg>
<div class="a" style="left:164px;top:541.2px;width:988px;height:66.5px;background:#fff"></div>
<div class="t logf" style="left:165.2px;top:547.6px;font-size:6.9px;color:#1a1a1a;transform:translate(0,-50%);">2022-06-22 14:39:12  设备192.168.1.202发生错误System.Net.Sockets.SocketException (0x80004005): 由于连接方在一段时间后没有正确答复或连接的主机没有反应，连接尝试失败。,断开连接......</div>
<div class="t logf" style="left:165.2px;top:556.85px;font-size:6.9px;color:#1a1a1a;transform:translate(0,-50%);">2022-06-22 14:39:19  设备右洞环境监测接收数据长度：18</div>
<div class="t logf" style="left:165.2px;top:566.1px;font-size:6.9px;color:#1a1a1a;transform:translate(0,-50%);">2022-06-22 14:39:19  设备右洞环境监测：获取数据正常......</div>
<div class="t logf" style="left:165.2px;top:575.35px;font-size:6.9px;color:#1a1a1a;transform:translate(0,-50%);">2022-06-22 14:39:29  设备右洞环境监测接收数据长度：18</div>
<div class="t logf" style="left:165.2px;top:584.6px;font-size:6.9px;color:#1a1a1a;transform:translate(0,-50%);">2022-06-22 14:39:29  设备右洞环境监测：获取数据正常......</div>
<div class="a" style="left:1140.5px;top:541.2px;width:11.2px;height:66.5px;background:#f1f1f1;border-left:1px solid #e6e6e6"></div>
<svg style="left:1141px;top:541px" width="11" height="67" viewBox="0 0 11 67"><path d="M3.500 8L5.500 5.500 7.500 8zM3.500 60L5.500 62.500 7.500 60z" fill="#444"/><rect x="1.200" y="44" width="8.600" height="10.500" rx="1.200" fill="#ededed" stroke="#a9a9a9" stroke-width=".7"/><path d="M3.800 47.700h3.400M3.800 49.200h3.400M3.800 50.700h3.400" stroke="#777" stroke-width=".6"/></svg>
<div class="a" style="left:48px;top:607.4px;width:1104px;height:17.5px;background:linear-gradient(#2d6eba,#2a67b3)"></div>
<div class="t" style="left:51px;top:616.5px;font-size:7px;color:#cfe1f6;transform:translate(0,-50%);letter-spacing:-.02px">系统时间：2022年06月22日 星期三 14:39:33</div>
<div class="t" style="left:200px;top:616.5px;font-size:6.9px;color:#0d1f45;transform:translate(0,-50%);letter-spacing:-.05px">设备状态:未设置场外设备</div>
<div class="t" style="left:810.7px;top:616.5px;font-size:7px;color:#cfe1f6;transform:translate(0,-50%);letter-spacing:-.1px">公司名称：苏州陆禾电子科技有限公司</div>
<div class="t" style="left:934.5px;top:616.5px;font-size:7px;color:#cfe1f6;transform:translate(0,-50%);letter-spacing:-.1px">3D引擎服务：已安装</div>
<div class="t" style="left:1029.5px;top:616.7px;font-size:6px;color:#cfe1f6;transform:translate(0,-50%);">▾</div>
<div class="t" style="left:1039.7px;top:616.5px;font-size:7px;color:#cfe1f6;transform:translate(0,-50%);letter-spacing:-.1px">定位引擎:已启动</div>
<div class="t" style="left:1098.3px;top:616.7px;font-size:6px;color:#cfe1f6;transform:translate(0,-50%);">▾</div>
<div class="t" style="left:1105.5px;top:616.5px;font-size:7px;color:#cfe1f6;transform:translate(0,-50%);letter-spacing:-.1px">版本：V1.0</div>
<svg style="left:1144px;top:617px" width="7" height="7" viewBox="0 0 7 7"><g fill="#a9c6ea"><rect x="5" y="1" width="1.200" height="1.200"/><rect x="3" y="3" width="1.200" height="1.200"/><rect x="5" y="3" width="1.200" height="1.200"/><rect x="1" y="5" width="1.200" height="1.200"/><rect x="3" y="5" width="1.200" height="1.200"/><rect x="5" y="5" width="1.200" height="1.200"/></g></svg>
<div class="a" style="left:48px;top:624.9px;width:1104px;height:23px;background:linear-gradient(90deg,#3a84cd 0%,#3f90d7 14%,#4b9ddd 30%,#3d90d6 42%,#2f85cf 55%,#2b7bc8 66%,#2569b8 74%,#1f59a4 84%,#1c4d93 93%,#1b488b 100%);overflow:hidden"><div class="a" style="left:0;top:0;width:100%;height:1px;background:#7fb3e6"></div><div class="a" style="left:738px;top:-30px;width:26px;height:90px;background:linear-gradient(90deg,rgba(190,225,250,0),rgba(200,230,252,.8) 50%,rgba(190,225,250,0));transform:rotate(-58deg)"></div><div class="a" style="left:0;top:12px;width:100%;height:11px;background:linear-gradient(rgba(20,60,130,0),rgba(20,60,130,.18))"></div></div>
<svg style="left:52.500px;top:625.300px" width="23" height="22" viewBox="0 0 22 21"><defs><radialGradient id="orb" cx=".5" cy=".3" r=".75"><stop offset="0" stop-color="#b9dcf6"/><stop offset=".5" stop-color="#4b8fd0"/><stop offset="1" stop-color="#1d4f96"/></radialGradient></defs>
<circle cx="11" cy="10.500" r="10" fill="url(#orb)" stroke="#9cc4ea" stroke-width=".7"/>
<g transform="translate(11 10.700) scale(1.5) translate(-10.100 -10.700)"><path d="M6.200 7.200c1.400-.8 2.700-.8 3.900 0l-.7 3c-1.200-.7-2.500-.7-3.900 0z" fill="#f0582a"/><path d="M10.900 7.500c1.300.8 2.600.8 4-.1l-.7 3c-1.400.9-2.700.9-4 .1z" fill="#8bcb3f"/>
<path d="M5.300 10.900c1.400-.8 2.700-.8 3.900 0l-.7 3c-1.200-.7-2.500-.7-3.900 0z" fill="#45a7ec"/><path d="M10 11.200c1.300.8 2.600.8 4-.1l-.7 3c-1.400.9-2.700.9-4 .1z" fill="#fbc92e"/></g></svg>
<svg style="left:90px;top:626.500px" width="19" height="19" viewBox="0 0 19 19"><rect x=".3" y=".3" width="18.400" height="18.400" rx="4" fill="#fff"/>
<circle cx="6" cy="11" r="3.100" fill="none" stroke="#2a8df6" stroke-width="1.600"/><circle cx="13" cy="11" r="3.100" fill="none" stroke="#2a8df6" stroke-width="1.600"/><circle cx="9.500" cy="6" r="2.800" fill="none" stroke="#2a8df6" stroke-width="1.600"/><path d="M7.300 4.300a2.800 2.800 0 0 1 4.400 0" fill="none" stroke="#f0504b" stroke-width="1.700"/><rect x="6.300" y="16.800" width="3" height="1.200" fill="#e24"/><rect x="9.700" y="16.800" width="3" height="1.200" fill="#36f"/></svg>
<svg style="left:125px;top:627px" width="21" height="18" viewBox="0 0 21 18"><ellipse cx="8" cy="6.800" rx="7.200" ry="6" fill="#4ec934"/><path d="M3.500 11l-.8 3 3.300-1.800z" fill="#4ec934"/>
<ellipse cx="14.300" cy="11.500" rx="5.800" ry="4.900" fill="#ececec"/><path d="M17 15.300l1.300 2.200-3.300-1.200z" fill="#ececec"/><circle cx="5.500" cy="5" r=".9" fill="#2a6"/><circle cx="10.500" cy="5" r=".9" fill="#2a6"/><circle cx="12.300" cy="10.200" r=".8" fill="#999"/><circle cx="16.300" cy="10.200" r=".8" fill="#999"/></svg>
<svg style="left:161.500px;top:626.500px" width="19" height="19" viewBox="-10 -10 20 20"><circle r="9.500" fill="#fff"/>
<path d="M0 0L-8.230 -4.750A9.500 9.500 0 0 1 8.230 -4.750z" fill="#e33b2e"/><path d="M0 0L8.230 -4.750A9.500 9.500 0 0 1 0 9.500z" fill="#fbc116"/><path d="M0 0L0 9.500A9.500 9.500 0 0 1 -8.230 -4.750z" fill="#2da94f"/>
<circle r="4.500" fill="#fff"/><circle r="3.500" fill="#4285f4"/></svg>
<svg style="left:197px;top:628px" width="21" height="16" viewBox="0 0 21 16"><path d="M2 2.200L6 13.800 10.300 4.200 13.800 13.800 18.600 2.200" fill="none" stroke="#f0301f" stroke-width="2.900" stroke-linejoin="bevel"/><path d="M12.600 2.600H20" stroke="#ff6a2c" stroke-width="2.600"/></svg>
<div class="a" style="left:225px;top:625.4px;width:34.5px;height:22.2px;background:linear-gradient(rgba(235,245,255,.62),rgba(190,218,245,.5));border:1px solid rgba(255,255,255,.75);border-radius:2px;box-shadow:0 0 0 .6px rgba(60,90,130,.65)"></div>
<svg style="left:232.500px;top:627px" width="20" height="19" viewBox="0 0 20 19"><defs><linearGradient id="cam" x1="0" y1="0" x2="0" y2="1"><stop offset="0" stop-color="#4fb2ee"/><stop offset="1" stop-color="#1c7fd2"/></linearGradient></defs><rect x=".3" y=".3" width="19.400" height="18.400" rx="3.500" fill="url(#cam)"/>
<path d="M3.500 7.200l9.500-2 1.700 4.800-9.500 2.200z" fill="#fff"/><path d="M14 6.800l2.300.8.300 2.500-1.700.3z" fill="#fff"/><path d="M7 12.300l2.500-.6.400 2.300h3.600v1.300H8z" fill="#fff"/></svg>
<svg style="left:940px;top:627px" width="150" height="20" viewBox="0 0 150 20"><rect x="3.500" y="7" width="7" height="4.500" rx=".8" fill="#d9dde2"/><path d="M5 7l2-2h3" stroke="#d9dde2" stroke-width=".8" fill="none"/><circle cx="19.300" cy="6" r="1.300" fill="#fff"/><path d="M17.800 10.500h3l-1.500 1.800z" fill="#fff"/><path d="M26.500 14h6.500M29.700 14V7.500M28.400 7h2.600" stroke="#dfe6ee" stroke-width="1.100"/><rect x="38" y="8" width="6.500" height="5.500" fill="#e8eef4"/><path d="M43 6.500l3-1.500v7" stroke="#5fd06a" stroke-width="1.300" fill="none"/><rect x="50" y="5.500" width="8.500" height="8.500" rx="1.500" fill="#f3661f"/><path d="M52 8l2 1.500 2.500-1.200v3.500" stroke="#fff" stroke-width="1" fill="none"/><circle cx="68.500" cy="10.500" r="3.800" fill="#fff"/><circle cx="68.500" cy="10.500" r="1.500" fill="#e03a2a"/><path d="M64.500 5.500l2.500 2" stroke="#f2c230" stroke-width="1.500"/><ellipse cx="81.500" cy="8" rx="2.600" ry="3" fill="#222"/><ellipse cx="81.500" cy="12.300" rx="3.600" ry="2.300" fill="#d42a2a"/><ellipse cx="81.500" cy="9" rx="1.500" ry="1.200" fill="#fff"/><path d="M79.500 14.500h4" stroke="#f2b530" stroke-width="1.200"/><rect x="90.500" y="6" width="9" height="7.500" rx="1" fill="#3b3f3a"/><rect x="92" y="7.500" width="6" height="4.500" fill="#76b900"/><ellipse cx="110" cy="10" rx="4.500" ry="3.600" fill="#2b2b2b"/><path d="M106 8l7 5M108 6.500l5 3" stroke="#eee" stroke-width=".9"/><rect x="121.500" y="7" width="6.500" height="6" fill="none" stroke="#f3f6fa" stroke-width="1.200"/><rect x="119.500" y="5.500" width="3" height="2.500" fill="#f3f6fa"/><rect x="127" y="11.500" width="2.500" height="2.500" fill="#f3f6fa"/><path d="M135.500 8.500h1.700l2.300-2.200v7.400l-2.300-2.200h-1.700z" fill="#fff"/><path d="M141 8a3 3 0 0 1 0 4" stroke="#fff" stroke-width=".8" fill="none"/></svg>
<div class="t" style="left:1117.3px;top:631.6px;font-size:7.4px;color:#fff;transform:translate(-50%,-50%);">14:39</div>
<div class="t" style="left:1117px;top:642.3px;font-size:7.4px;color:#fff;transform:translate(-50%,-50%);">2022-06-22</div>
<div class="a" style="left:1143.7px;top:625.5px;width:8px;height:22.2px;background:linear-gradient(90deg,#1d447f,#2d5fa0 50%,#1f4a88);border-left:1px solid #6f93c2;opacity:.95"></div>
<div class="a" style="left:28px;top:701px;width:572px;height:324.5px;background:linear-gradient(90deg,#b5d3f3,#c9e0f8 30%,#bcd8f5 60%,#c6def7);border:1px solid #6e7f94;border-top-color:#3c4653;border-bottom-color:#a8c6e8;border-left-color:#9dbde2;border-right-color:#9dbde2"></div>
<div class="a" style="left:29px;top:702px;width:570px;height:15.3px;background:linear-gradient(90deg,rgba(255,255,255,0) 0,rgba(255,255,255,.18) 12%,rgba(255,255,255,0) 22%,rgba(255,255,255,.15) 40%,rgba(255,255,255,0) 55%,rgba(255,255,255,.18) 75%,rgba(255,255,255,0) 100%),linear-gradient(#d2e4f8,#bcd6f2)"></div>
<svg style="left:31px;top:705px" width="8" height="8" viewBox="0 0 8 8"><rect x="0" y="2" width="4" height="5" fill="#d8402a"/><rect x="3" y=".5" width="4.500" height="5" fill="#f2c53c" stroke="#fff" stroke-width=".5"/><rect x="2.500" y="4.500" width="4" height="3" fill="#3b78d8"/></svg>
<div class="t" style="left:42.5px;top:709.3px;font-size:6.6px;color:#111;transform:translate(0,-50%);">环境记录</div>
<div class="a" style="left:542px;top:701.5px;width:30.5px;height:11.8px;background:linear-gradient(#e9f1fa,#c6d9ee 48%,#b0c8e3 52%,#cbdcf0);border:1px solid #6f8199;border-top:none;border-radius:0 0 0 3px"></div>
<div class="a" style="left:557px;top:701.5px;width:1px;height:11.8px;background:#7d8fa6"></div>
<div class="a" style="left:572px;top:701.5px;width:26.5px;height:11.8px;background:linear-gradient(#ecb9ad,#d67a66 46%,#c4452e 54%,#d8735c);border:1px solid #7c3a30;border-top:none;border-radius:0 0 3px 0"></div>
<svg style="left:542px;top:701px" width="58" height="13" viewBox="0 0 58 13"><rect x="4.600" y="6.300" width="6.400" height="2.600" rx=".9" fill="#fff" stroke="#5b6b82" stroke-width=".5"/><rect x="19.600" y="3" width="6.400" height="5.400" rx="1.100" fill="#fff" stroke="#5b6b82" stroke-width=".5"/><rect x="21.200" y="4.600" width="3.200" height="2" rx=".6" fill="#b7c6d8" stroke="#5b6b82" stroke-width=".35"/><path d="M41.600 3.700l3.900 4.300M45.500 3.700l-3.900 4.300" stroke="#5e2a22" stroke-width="2.300" stroke-linecap="round"/><path d="M41.600 3.700l3.900 4.300M45.500 3.700l-3.900 4.300" stroke="#fff" stroke-width="1.400" stroke-linecap="round"/></svg>
<div class="a" style="left:30.5px;top:717.3px;width:567px;height:305px;background:#f9f9f9"></div>
<div class="a" style="left:30.5px;top:729.3px;width:457px;height:273.5px;background:#fff;border:1px solid #919ba6;border-bottom:none"></div>
<div class="a" style="left:31.3px;top:719.5px;width:32px;height:10.3px;background:linear-gradient(#f7f7f7,#e6e6e6);border:1px solid #9aa1aa;border-bottom:none"></div>
<div class="t" style="left:47.3px;top:725.3px;font-size:6.8px;color:#111;transform:translate(-50%,-50%);">历史记录</div>
<div class="a" style="left:63px;top:718px;width:28.3px;height:12.2px;background:#fff;border:1px solid #8f98a3;border-bottom:none"></div>
<div class="t" style="left:77.3px;top:724.2px;font-size:6.6px;color:#111;transform:translate(-50%,-50%);">曲线图</div>
<svg style="left:0;top:0" width="1200" height="1052"><g font-size="6.600" fill="#555"><path d="M64.5 947.19H390.70M64.5 935.07H390.70M64.5 922.95H390.70M64.5 910.83H390.70M64.5 898.72H390.70M64.5 886.60H390.70M64.5 874.48H390.70M64.5 862.36H390.70M64.5 850.24H390.70M64.5 838.13H390.70M64.5 826.01H390.70M64.5 813.89H390.70M64.5 801.77H390.70M64.5 789.65H390.70M64.5 777.54H390.70M64.5 765.42H390.70M64.5 753.30H390.70M146.05 753.30V959.31M227.60 753.30V959.31M309.15 753.30V959.31M390.70 753.30V959.31" stroke="#d0d0d0" stroke-width=".8" stroke-dasharray="1.400 1" fill="none"/><path d="M64.5 752.90V959.71M64.1 959.31H391.10M60.9 753.30H64.5M62.5 759.36H64.5M60.9 765.42H64.5M62.5 771.48H64.5M60.9 777.54H64.5M62.5 783.59H64.5M60.9 789.65H64.5M62.5 795.71H64.5M60.9 801.77H64.5M62.5 807.83H64.5M60.9 813.89H64.5M62.5 819.95H64.5M60.9 826.01H64.5M62.5 832.07H64.5M60.9 838.13H64.5M62.5 844.18H64.5M60.9 850.24H64.5M62.5 856.30H64.5M60.9 862.36H64.5M62.5 868.42H64.5M60.9 874.48H64.5M62.5 880.54H64.5M60.9 886.60H64.5M62.5 892.66H64.5M60.9 898.72H64.5M62.5 904.77H64.5M60.9 910.83H64.5M62.5 916.89H64.5M60.9 922.95H64.5M62.5 929.01H64.5M60.9 935.07H64.5M62.5 941.13H64.5M60.9 947.19H64.5M62.5 953.25H64.5M60.9 959.31H64.5M105.28 957.51V959.31M146.05 956.01V959.31M186.82 957.51V959.31M227.60 956.01V959.31M268.38 957.51V959.31M309.15 956.01V959.31M349.93 957.51V959.31M390.70 956.01V959.31" stroke="#444" stroke-width="1" fill="none"/><text x="59.0" y="961.71" text-anchor="end">8</text><text x="59.0" y="949.59" text-anchor="end">9</text><text x="59.0" y="937.47" text-anchor="end">10</text><text x="59.0" y="925.35" text-anchor="end">11</text><text x="59.0" y="913.23" text-anchor="end">12</text><text x="59.0" y="901.12" text-anchor="end">13</text><text x="59.0" y="889.00" text-anchor="end">14</text><text x="59.0" y="876.88" text-anchor="end">15</text><text x="59.0" y="864.76" text-anchor="end">16</text><text x="59.0" y="852.64" text-anchor="end">17</text><text x="59.0" y="840.53" text-anchor="end">18</text><text x="59.0" y="828.41" text-anchor="end">19</text><text x="59.0" y="816.29" text-anchor="end">20</text><text x="59.0" y="804.17" text-anchor="end">21</text><text x="59.0" y="792.05" text-anchor="end">22</text><text x="59.0" y="779.94" text-anchor="end">23</text><text x="59.0" y="767.82" text-anchor="end">24</text><text x="59.0" y="755.70" text-anchor="end">25</text><text x="64.30" y="968.01" text-anchor="middle">1</text><text x="145.85" y="968.01" text-anchor="middle">2</text><text x="227.40" y="968.01" text-anchor="middle">3</text><text x="308.95" y="968.01" text-anchor="middle">4</text><text x="390.50" y="968.01" text-anchor="middle">5</text><polyline points="64.50,813.89 146.05,789.65 227.60,826.01 309.15,765.42 390.70,753.30" fill="none" stroke="#ffc4cf" stroke-width=".9"/><polyline points="64.50,959.31 146.05,910.83 227.60,935.07 309.15,910.83 390.70,874.48" fill="none" stroke="#b9dfee" stroke-width=".9"/><polyline points="64.50,935.07 146.05,862.36 227.60,850.24 309.15,874.48 390.70,777.54" fill="none" stroke="#a6f0a6" stroke-width=".9"/><polyline points="64.50,862.36 146.05,826.01 227.60,874.48 309.15,789.65 390.70,838.13" fill="none" stroke="#de7fe0" stroke-width=".9"/><rect x="62.90" y="812.29" width="3.200" height="3.200" fill="#ffe3ee" stroke="#ff5fa8" stroke-width=".9"/><rect x="144.45" y="788.05" width="3.200" height="3.200" fill="#ffe3ee" stroke="#ff5fa8" stroke-width=".9"/><rect x="226.00" y="824.41" width="3.200" height="3.200" fill="#ffe3ee" stroke="#ff5fa8" stroke-width=".9"/><rect x="307.55" y="763.82" width="3.200" height="3.200" fill="#ffe3ee" stroke="#ff5fa8" stroke-width=".9"/><rect x="389.10" y="751.70" width="3.200" height="3.200" fill="#ffe3ee" stroke="#ff5fa8" stroke-width=".9"/><circle cx="64.50" cy="959.31" r="1.600" fill="#fff" stroke="#3f62c4" stroke-width=".9"/><circle cx="146.05" cy="910.83" r="1.600" fill="#fff" stroke="#3f62c4" stroke-width=".9"/><circle cx="227.60" cy="935.07" r="1.600" fill="#fff" stroke="#3f62c4" stroke-width=".9"/><circle cx="309.15" cy="910.83" r="1.600" fill="#fff" stroke="#3f62c4" stroke-width=".9"/><circle cx="390.70" cy="874.48" r="1.600" fill="#fff" stroke="#3f62c4" stroke-width=".9"/><path d="M64.50 933.17L66.40 936.47H62.60z" fill="#9be89b" stroke="#2c9a2c" stroke-width=".8"/><path d="M146.05 860.46L147.95 863.76H144.15z" fill="#9be89b" stroke="#2c9a2c" stroke-width=".8"/><path d="M227.60 848.34L229.50 851.64H225.70z" fill="#9be89b" stroke="#2c9a2c" stroke-width=".8"/><path d="M309.15 872.58L311.05 875.88H307.25z" fill="#9be89b" stroke="#2c9a2c" stroke-width=".8"/><path d="M390.70 775.64L392.60 778.94H388.80z" fill="#9be89b" stroke="#2c9a2c" stroke-width=".8"/><path d="M64.50 860.46L66.40 862.36L64.50 864.26L62.60 862.36z" fill="#c34fd2"/><path d="M146.05 824.11L147.95 826.01L146.05 827.91L144.15 826.01z" fill="#c34fd2"/><path d="M227.60 872.58L229.50 874.48L227.60 876.38L225.70 874.48z" fill="#c34fd2"/><path d="M309.15 787.75L311.05 789.65L309.15 791.55L307.25 789.65z" fill="#c34fd2"/><path d="M390.70 836.23L392.60 838.13L390.70 840.03L388.80 838.13z" fill="#c34fd2"/><path d="M426.300 853.30H443.700" stroke="#ff9db4" stroke-width="1.100"/><g transform="translate(435 853.30) scale(1.4) translate(-435 -853.30)"><rect x="433.40" y="851.70" width="3.200" height="3.200" fill="#ffe3ee" stroke="#ff5fa8" stroke-width=".9"/></g><text x="447.200" y="855.70" font-size="6.900" fill="#333">series 0</text><path d="M426.300 861.78H443.700" stroke="#9fd3ea" stroke-width="1.100"/><g transform="translate(435 861.78) scale(1.4) translate(-435 -861.78)"><circle cx="435.00" cy="861.78" r="1.600" fill="#fff" stroke="#3f62c4" stroke-width=".9"/></g><text x="447.200" y="864.18" font-size="6.900" fill="#333">series 1</text><path d="M426.300 870.26H443.700" stroke="#6fe26f" stroke-width="1.100"/><g transform="translate(435 870.26) scale(1.4) translate(-435 -870.26)"><path d="M435.00 868.36L436.90 871.66H433.10z" fill="#9be89b" stroke="#2c9a2c" stroke-width=".8"/></g><text x="447.200" y="872.66" font-size="6.900" fill="#333">series 2</text><path d="M426.300 878.74H443.700" stroke="#d75fdc" stroke-width="1.100"/><g transform="translate(435 878.74) scale(1.4) translate(-435 -878.74)"><path d="M435.00 876.84L436.90 878.74L435.00 880.64L433.10 878.74z" fill="#c34fd2"/></g><text x="447.200" y="881.14" font-size="6.900" fill="#333">series 3</text></g></svg>
<div class="a" style="left:30.5px;top:1002.8px;width:457.5px;height:19.5px;background:#c1c1c1;border-top:1px solid #b2b2b2"></div>
<div class="t" style="left:35.5px;top:1013.8px;font-size:6.7px;color:#111;transform:translate(0,-50%);">共0条记录，共0页</div>
<div class="t" style="left:127.5px;top:1013.8px;font-size:6.7px;color:#111;transform:translate(0,-50%);">每页</div>
<div class="a" style="left:144.5px;top:1007px;width:30.5px;height:13.2px;background:linear-gradient(#fdfdfd,#e4e4e4);border:1px solid #8b8b8b;border-radius:1.500px"></div>
<div class="t" style="left:147.3px;top:1013.8px;font-size:6.7px;color:#111;transform:translate(0,-50%);">20</div>
<svg style="left:167.500px;top:1012.300px" width="5" height="3" viewBox="0 0 5 3"><path d="M0 0h5L2.500 3z" fill="#111"/></svg>
<div class="t" style="left:179.3px;top:1013.8px;font-size:6.7px;color:#111;transform:translate(0,-50%);">条记录</div>
<div class="a" style="left:216.3px;top:1007.3px;width:20px;height:12.7px;background:#e6e6e6"></div>
<svg style="left:216.3px;top:1007.300px" width="20" height="12.700" viewBox="0 0 20 12.700"><rect x="6.800" y="3" width="1.500" height="7" fill="#f28a1e"/><path d="M13.200 3v7L8.600 6.500z" fill="#f28a1e"/></svg>
<div class="a" style="left:240px;top:1007.3px;width:20px;height:12.7px;background:#e6e6e6"></div>
<svg style="left:240px;top:1007.300px" width="20" height="12.700" viewBox="0 0 20 12.700"><path d="M11.800 3.200L8.500 6.500l3.300 3.300" fill="none" stroke="#f28a1e" stroke-width="1.500"/></svg>
<div class="a" style="left:263px;top:1007.3px;width:15.8px;height:12.7px;background:#fbfbfb"></div>
<div class="t" style="left:271px;top:1013.8px;font-size:6.7px;color:#111;transform:translate(-50%,-50%);">1</div>
<div class="a" style="left:283px;top:1007.3px;width:20px;height:12.7px;background:#e6e6e6"></div>
<svg style="left:283px;top:1007.300px" width="20" height="12.700" viewBox="0 0 20 12.700"><path d="M8.500 3.200l3.300 3.300-3.300 3.300" fill="none" stroke="#f28a1e" stroke-width="1.500"/></svg>
<div class="a" style="left:307px;top:1007.3px;width:19.7px;height:12.7px;background:#e6e6e6"></div>
<svg style="left:307px;top:1007.300px" width="19.7" height="12.700" viewBox="0 0 20 12.700"><rect x="11.800" y="3" width="1.500" height="7" fill="#f28a1e"/><path d="M6.900 3v7l4.600-3.500z" fill="#f28a1e"/></svg>
<div class="a" style="left:330.7px;top:1007.3px;width:41.8px;height:12.7px;background:#fff"></div>
<svg style="left:366px;top:1012.600px" width="4.500" height="3" viewBox="0 0 5 3"><path d="M0 0h5L2.500 3z" fill="#111"/></svg>
<div class="t" style="left:376px;top:1013.8px;font-size:6.7px;color:#111;transform:translate(0,-50%);">页</div>
<div class="a" style="left:388.8px;top:1007.3px;width:31.2px;height:12.7px;background:#e6e6e6"></div>
<svg style="left:391.500px;top:1009.500px" width="8" height="8" viewBox="0 0 8 8"><path d="M.8 7c.2-3 1.800-4.600 4.200-4.600V.8l2.700 2.900L5 6.500V4.800C3.200 4.700 1.800 5.400.8 7z" fill="#f28a1e"/></svg>
<div class="t" style="left:401px;top:1013.8px;font-size:6.7px;color:#111;transform:translate(0,-50%);">跳转</div>
<div class="a" style="left:488px;top:717.3px;width:109.5px;height:305px;background:#f8f8f8"></div>
<div class="t" style="left:492.5px;top:727px;font-size:6.6px;color:#111;transform:translate(0,-50%);">选择设备：</div>
<div class="a" style="left:492px;top:733px;width:103.8px;height:77.5px;background:#fff;border:1px solid #8e949c"></div>
<div class="a" style="left:493.3px;top:734.5px;width:101.3px;height:6.5px;background:#3399ff"></div>
<div class="t" style="left:493.8px;top:737.8px;font-size:6.5px;color:#fff;transform:translate(0,-50%);">左洞环境监测</div>
<div class="t" style="left:493.8px;top:745.2px;font-size:6.5px;color:#111;transform:translate(0,-50%);">右洞环境监测</div>
<div class="t" style="left:492px;top:817.5px;font-size:6.6px;color:#111;transform:translate(0,-50%);">查询时间(起)：</div>
<div class="t" style="left:492px;top:846.8px;font-size:6.6px;color:#111;transform:translate(0,-50%);">查询时间(止)：</div>
<div class="t" style="left:492px;top:875px;font-size:6.6px;color:#111;transform:translate(0,-50%);">报警类型：</div>
<div class="a" style="left:501.3px;top:827px;width:74.3px;height:12.7px;background:#fff;border:1px solid #e3e9ef"></div>
<div class="a" style="left:504.3px;top:830px;width:6.3px;height:6.3px;background:#eef3fa;border:1px solid #8d9bb0"></div>
<svg style="left:505px;top:830.8px" width="5" height="5" viewBox="0 0 5 5"><path d="M.6 2.500l1.400 1.500L4.400.7" fill="none" stroke="#2b3f9e" stroke-width="1"/></svg>
<div class="t" style="left:513.5px;top:833.5px;font-size:6.9px;color:#111;transform:translate(0,-50%);letter-spacing:.1px">2022-06-22</div>
<svg style="left:560.800px;top:830px" width="12" height="7" viewBox="0 0 12 7"><rect x=".4" y=".4" width="5" height="6.200" rx=".8" fill="#e9e9e9" stroke="#777" stroke-width=".6"/><path d="M7.300 2.800h3.700L9.150 5z" fill="#2d4a8a"/></svg>
<div class="a" style="left:501.3px;top:854.6px;width:74.3px;height:12.7px;background:#fff;border:1px solid #e3e9ef"></div>
<div class="a" style="left:504.3px;top:857.6px;width:6.3px;height:6.3px;background:#eef3fa;border:1px solid #8d9bb0"></div>
<svg style="left:505px;top:858.4px" width="5" height="5" viewBox="0 0 5 5"><path d="M.6 2.500l1.400 1.500L4.400.7" fill="none" stroke="#2b3f9e" stroke-width="1"/></svg>
<div class="t" style="left:513.5px;top:861.1px;font-size:6.9px;color:#111;transform:translate(0,-50%);letter-spacing:.1px">2022-06-22</div>
<svg style="left:560.800px;top:857.6px" width="12" height="7" viewBox="0 0 12 7"><rect x=".4" y=".4" width="5" height="6.200" rx=".8" fill="#e9e9e9" stroke="#777" stroke-width=".6"/><path d="M7.300 2.800h3.700L9.150 5z" fill="#2d4a8a"/></svg>
<div class="a" style="left:501.3px;top:881.3px;width:74.5px;height:14.2px;background:linear-gradient(#f4f4f4,#e6e6e6 50%,#d6d6d6);border:1px solid #8a8a8a;border-radius:1.800px"></div>
<svg style="left:568.800px;top:887.600px" width="4.200" height="2.600" viewBox="0 0 5 3"><path d="M0 0h5L2.500 3z" fill="#111"/></svg>
<div class="a" style="left:501px;top:899.3px;width:74.8px;height:15.3px;background:#8080ff"></div>
<div class="t" style="left:538.4px;top:907px;font-size:6.6px;color:#eef;transform:translate(-50%,-50%);">查询</div>
<div class="a" style="left:501px;top:918.3px;width:74.8px;height:15.5px;background:#8080ff"></div>
<div class="t" style="left:538.4px;top:926px;font-size:6.6px;color:#eef;transform:translate(-50%,-50%);">导出</div>
<div class="a" style="left:622.3px;top:701px;width:541.7px;height:324.5px;background:linear-gradient(90deg,#c3dbf5,#b9d5f3 25%,#cde2f9 55%,#bad6f4 80%,#c9dff7);border:1.500px solid #30343a;border-top-color:#c3d9f1;border-bottom-color:#8fa9c6;border-radius:5px 5px 2px 2px"></div>
<div class="t song" style="left:630px;top:712.3px;font-size:10.7px;color:#1a1a1a;transform:translate(0,-50%);font-weight:500;letter-spacing:.05px">环境参数</div>
<div class="a" style="left:629.3px;top:723.3px;width:527.2px;height:296.4px;background:#f8f8f8;border:1px solid #8d9cae"></div>
<div class="a" style="left:630.3px;top:724.3px;width:525.2px;height:25px;background:#fff"></div>
<div class="a" style="left:630.3px;top:749.3px;width:525.2px;height:6px;background:#f4f6f9;border-top:1px solid #e9eef4"></div>
<div class="a" style="left:630.3px;top:755.2px;width:525.2px;height:1px;background:#cfdde9"></div>
<svg style="left:633px;top:727px" width="3" height="19" viewBox="0 0 3 19"><g fill="#a9a9a9"><rect x=".6" y="1" width="1.200" height="1.200"/><rect x=".6" y="3.800" width="1.200" height="1.200"/><rect x=".6" y="6.600" width="1.200" height="1.200"/><rect x=".6" y="9.400" width="1.200" height="1.200"/><rect x=".6" y="12.200" width="1.200" height="1.200"/><rect x=".6" y="15" width="1.200" height="1.200"/></g></svg>
<svg style="left:640.700px;top:728px" width="18" height="17" viewBox="0 0 18 17"><rect width="18" height="17" fill="#0f7fd7"/><path d="M4 4.500h8.200l1.800 1.800v6.200H4z" fill="none" stroke="#fff" stroke-width="1.400"/><rect x="4.500" y="7" width="9" height="2.200" fill="#fff"/></svg>
<div class="t song" style="left:662px;top:736.8px;font-size:10.7px;color:#1a1a1a;transform:translate(0,-50%);font-weight:500">保存</div>
<div class="a" style="left:694.3px;top:728px;width:1px;height:18px;background:#cfcfcf"></div>
<svg style="left:699.500px;top:728px" width="18" height="17" viewBox="0 0 18 17"><rect width="18" height="17" fill="#0f7fd7"/><rect x="4.200" y="4.300" width="9.600" height="8.400" fill="#fff"/><path d="M7.300 6.800l3.400 3.400M10.700 6.800l-3.400 3.400" stroke="#0f7fd7" stroke-width="1.100"/></svg>
<div class="t song" style="left:720px;top:736.8px;font-size:10.7px;color:#1a1a1a;transform:translate(0,-50%);font-weight:500">退出</div>
<div class="t song" style="left:744.8px;top:783.4px;font-size:10.6px;color:#1a1a1a;transform:translate(-100%,-50%);"><span class="hwid">采集间隔:</span></div>
<div class="a" style="left:758.7px;top:775.5px;width:106.8px;height:16px;background:#fff;border:1px solid #9aa4ae;border-top-color:#7d8792"></div>
<div class="t song" style="left:759.8px;top:783.0px;font-size:10.6px;color:#111;transform:translate(0,-50%);"><span class="hwid">10</span></div>
<svg style="left:851.300px;top:777.0px" width="13" height="13" viewBox="0 0 13 13"><rect x=".4" y=".4" width="12.200" height="5.900" rx=".8" fill="#f4f4f4" stroke="#c5c5c5" stroke-width=".6"/><rect x=".4" y="6.700" width="12.200" height="5.900" rx=".8" fill="#f4f4f4" stroke="#c5c5c5" stroke-width=".6"/><path d="M4.300 4.500h4.400L6.500 2zM4.300 8.500h4.400L6.500 11z" fill="#3d5fae"/></svg>
<div class="t song" style="left:874.8px;top:783.4px;font-size:10.5px;color:#1a1a1a;transform:translate(0,-50%);"><span class="hwid">(单位: s)</span></div>
<div class="t song" style="left:744.8px;top:805.0px;font-size:10.6px;color:#1a1a1a;transform:translate(-100%,-50%);"><span class="hwid">保存数据间隔:</span></div>
<div class="a" style="left:758.7px;top:797.1px;width:106.8px;height:16px;background:#fff;border:1px solid #9aa4ae;border-top-color:#7d8792"></div>
<div class="t song" style="left:759.8px;top:804.6px;font-size:10.6px;color:#111;transform:translate(0,-50%);"><span class="hwid">60</span></div>
<svg style="left:851.300px;top:798.6px" width="13" height="13" viewBox="0 0 13 13"><rect x=".4" y=".4" width="12.200" height="5.900" rx=".8" fill="#f4f4f4" stroke="#c5c5c5" stroke-width=".6"/><rect x=".4" y="6.700" width="12.200" height="5.900" rx=".8" fill="#f4f4f4" stroke="#c5c5c5" stroke-width=".6"/><path d="M4.300 4.500h4.400L6.500 2zM4.300 8.500h4.400L6.500 11z" fill="#3d5fae"/></svg>
<div class="t song" style="left:874.8px;top:805.0px;font-size:10.5px;color:#1a1a1a;transform:translate(0,-50%);"><span class="hwid">(单位: s)</span></div>
<div class="t song" style="left:744.8px;top:826.6px;font-size:10.6px;color:#1a1a1a;transform:translate(-100%,-50%);"><span class="hwid">风速报警值:</span></div>
<div class="a" style="left:758.7px;top:818.7px;width:106.8px;height:16px;background:#fff;border:1px solid #9aa4ae;border-top-color:#7d8792"></div>
<div class="t song" style="left:759.8px;top:826.2px;font-size:10.6px;color:#111;transform:translate(0,-50%);"><span class="hwid">100.0</span></div>
<svg style="left:851.300px;top:820.2px" width="13" height="13" viewBox="0 0 13 13"><rect x=".4" y=".4" width="12.200" height="5.900" rx=".8" fill="#f4f4f4" stroke="#c5c5c5" stroke-width=".6"/><rect x=".4" y="6.700" width="12.200" height="5.900" rx=".8" fill="#f4f4f4" stroke="#c5c5c5" stroke-width=".6"/><path d="M4.300 4.500h4.400L6.500 2zM4.300 8.500h4.400L6.500 11z" fill="#3d5fae"/></svg>
<div class="t song" style="left:874.8px;top:826.6px;font-size:10.5px;color:#1a1a1a;transform:translate(0,-50%);"><span class="hwid">(单位: m/s)</span></div>
<div class="t song" style="left:744.8px;top:848.2px;font-size:10.6px;color:#1a1a1a;transform:translate(-100%,-50%);"><span class="hwid">噪音报警值:</span></div>
<div class="a" style="left:758.7px;top:840.3000000000001px;width:106.8px;height:16px;background:#fff;border:1px solid #9aa4ae;border-top-color:#7d8792"></div>
<div class="t song" style="left:759.8px;top:847.8000000000001px;font-size:10.6px;color:#111;transform:translate(0,-50%);"><span class="hwid">100.0</span></div>
<svg style="left:851.300px;top:841.8000000000001px" width="13" height="13" viewBox="0 0 13 13"><rect x=".4" y=".4" width="12.200" height="5.900" rx=".8" fill="#f4f4f4" stroke="#c5c5c5" stroke-width=".6"/><rect x=".4" y="6.700" width="12.200" height="5.900" rx=".8" fill="#f4f4f4" stroke="#c5c5c5" stroke-width=".6"/><path d="M4.300 4.500h4.400L6.500 2zM4.300 8.500h4.400L6.500 11z" fill="#3d5fae"/></svg>
<div class="t song" style="left:874.8px;top:848.2px;font-size:10.5px;color:#1a1a1a;transform:translate(0,-50%);"><span class="hwid">(单位: dB)</span></div>
<div class="t song" style="left:744.8px;top:869.8px;font-size:10.6px;color:#1a1a1a;transform:translate(-100%,-50%);"><span class="hwid">超温报警值:</span></div>
<div class="a" style="left:758.7px;top:861.9px;width:106.8px;height:16px;background:#fff;border:1px solid #9aa4ae;border-top-color:#7d8792"></div>
<div class="t song" style="left:759.8px;top:869.4px;font-size:10.6px;color:#111;transform:translate(0,-50%);"><span class="hwid">100.0</span></div>
<svg style="left:851.300px;top:863.4px" width="13" height="13" viewBox="0 0 13 13"><rect x=".4" y=".4" width="12.200" height="5.900" rx=".8" fill="#f4f4f4" stroke="#c5c5c5" stroke-width=".6"/><rect x=".4" y="6.700" width="12.200" height="5.900" rx=".8" fill="#f4f4f4" stroke="#c5c5c5" stroke-width=".6"/><path d="M4.300 4.500h4.400L6.500 2zM4.300 8.500h4.400L6.500 11z" fill="#3d5fae"/></svg>
<div class="t song" style="left:874.8px;top:869.8px;font-size:10.5px;color:#1a1a1a;transform:translate(0,-50%);"><span class="hwid">(单位: ℃)</span></div>
<div class="t song" style="left:744.8px;top:891.4px;font-size:10.6px;color:#1a1a1a;transform:translate(-100%,-50%);"><span class="hwid">低温报警值:</span></div>
<div class="a" style="left:758.7px;top:883.5px;width:106.8px;height:16px;background:#fff;border:1px solid #9aa4ae;border-top-color:#7d8792"></div>
<div class="t song" style="left:759.8px;top:891.0px;font-size:10.6px;color:#111;transform:translate(0,-50%);"><span class="hwid">0.0</span></div>
<svg style="left:851.300px;top:885.0px" width="13" height="13" viewBox="0 0 13 13"><rect x=".4" y=".4" width="12.200" height="5.900" rx=".8" fill="#f4f4f4" stroke="#c5c5c5" stroke-width=".6"/><rect x=".4" y="6.700" width="12.200" height="5.900" rx=".8" fill="#f4f4f4" stroke="#c5c5c5" stroke-width=".6"/><path d="M4.300 4.500h4.400L6.500 2zM4.300 8.500h4.400L6.500 11z" fill="#3d5fae"/></svg>
<div class="t song" style="left:874.8px;top:891.4px;font-size:10.5px;color:#1a1a1a;transform:translate(0,-50%);"><span class="hwid">(单位: ℃)</span></div>
<div class="t song" style="left:744.8px;top:913.0px;font-size:10.6px;color:#1a1a1a;transform:translate(-100%,-50%);"><span class="hwid">PM2.5报警值:</span></div>
<div class="a" style="left:758.7px;top:905.1px;width:106.8px;height:16px;background:#fff;border:1px solid #9aa4ae;border-top-color:#7d8792"></div>
<div class="t song" style="left:759.8px;top:912.6px;font-size:10.6px;color:#111;transform:translate(0,-50%);"><span class="hwid">600.0</span></div>
<svg style="left:851.300px;top:906.6px" width="13" height="13" viewBox="0 0 13 13"><rect x=".4" y=".4" width="12.200" height="5.900" rx=".8" fill="#f4f4f4" stroke="#c5c5c5" stroke-width=".6"/><rect x=".4" y="6.700" width="12.200" height="5.900" rx=".8" fill="#f4f4f4" stroke="#c5c5c5" stroke-width=".6"/><path d="M4.300 4.500h4.400L6.500 2zM4.300 8.500h4.400L6.500 11z" fill="#3d5fae"/></svg>
<div class="t song" style="left:874.8px;top:913.0px;font-size:10.5px;color:#1a1a1a;transform:translate(0,-50%);"><span class="hwid">(单位: ug/m³)</span></div>
<div class="t song" style="left:744.8px;top:934.6px;font-size:10.6px;color:#1a1a1a;transform:translate(-100%,-50%);"><span class="hwid">PM10报警值:</span></div>
<div class="a" style="left:758.7px;top:926.7px;width:106.8px;height:16px;background:#fff;border:1px solid #9aa4ae;border-top-color:#7d8792"></div>
<div class="t song" style="left:759.8px;top:934.2px;font-size:10.6px;color:#111;transform:translate(0,-50%);"><span class="hwid">600.0</span></div>
<svg style="left:851.300px;top:928.2px" width="13" height="13" viewBox="0 0 13 13"><rect x=".4" y=".4" width="12.200" height="5.900" rx=".8" fill="#f4f4f4" stroke="#c5c5c5" stroke-width=".6"/><rect x=".4" y="6.700" width="12.200" height="5.900" rx=".8" fill="#f4f4f4" stroke="#c5c5c5" stroke-width=".6"/><path d="M4.300 4.500h4.400L6.500 2zM4.300 8.500h4.400L6.500 11z" fill="#3d5fae"/></svg>
<div class="t song" style="left:874.8px;top:934.6px;font-size:10.5px;color:#1a1a1a;transform:translate(0,-50%);"><span class="hwid">(单位: ug/m³)</span></div>
<div class="t song" style="left:744.8px;top:956.2px;font-size:10.6px;color:#1a1a1a;transform:translate(-100%,-50%);"><span class="hwid">TSP报警值:</span></div>
<div class="a" style="left:758.7px;top:948.3000000000001px;width:106.8px;height:16px;background:#fff;border:1px solid #9aa4ae;border-top-color:#7d8792"></div>
<div class="t song" style="left:759.8px;top:955.8000000000001px;font-size:10.6px;color:#111;transform:translate(0,-50%);"><span class="hwid">600.0</span></div>
<svg style="left:851.300px;top:949.8000000000001px" width="13" height="13" viewBox="0 0 13 13"><rect x=".4" y=".4" width="12.200" height="5.900" rx=".8" fill="#f4f4f4" stroke="#c5c5c5" stroke-width=".6"/><rect x=".4" y="6.700" width="12.200" height="5.900" rx=".8" fill="#f4f4f4" stroke="#c5c5c5" stroke-width=".6"/><path d="M4.300 4.500h4.400L6.500 2zM4.300 8.500h4.400L6.500 11z" fill="#3d5fae"/></svg>
<div class="t song" style="left:874.8px;top:956.2px;font-size:10.5px;color:#1a1a1a;transform:translate(0,-50%);"><span class="hwid">(单位: ug/m³)</span></div>
</div>
</body></html>
